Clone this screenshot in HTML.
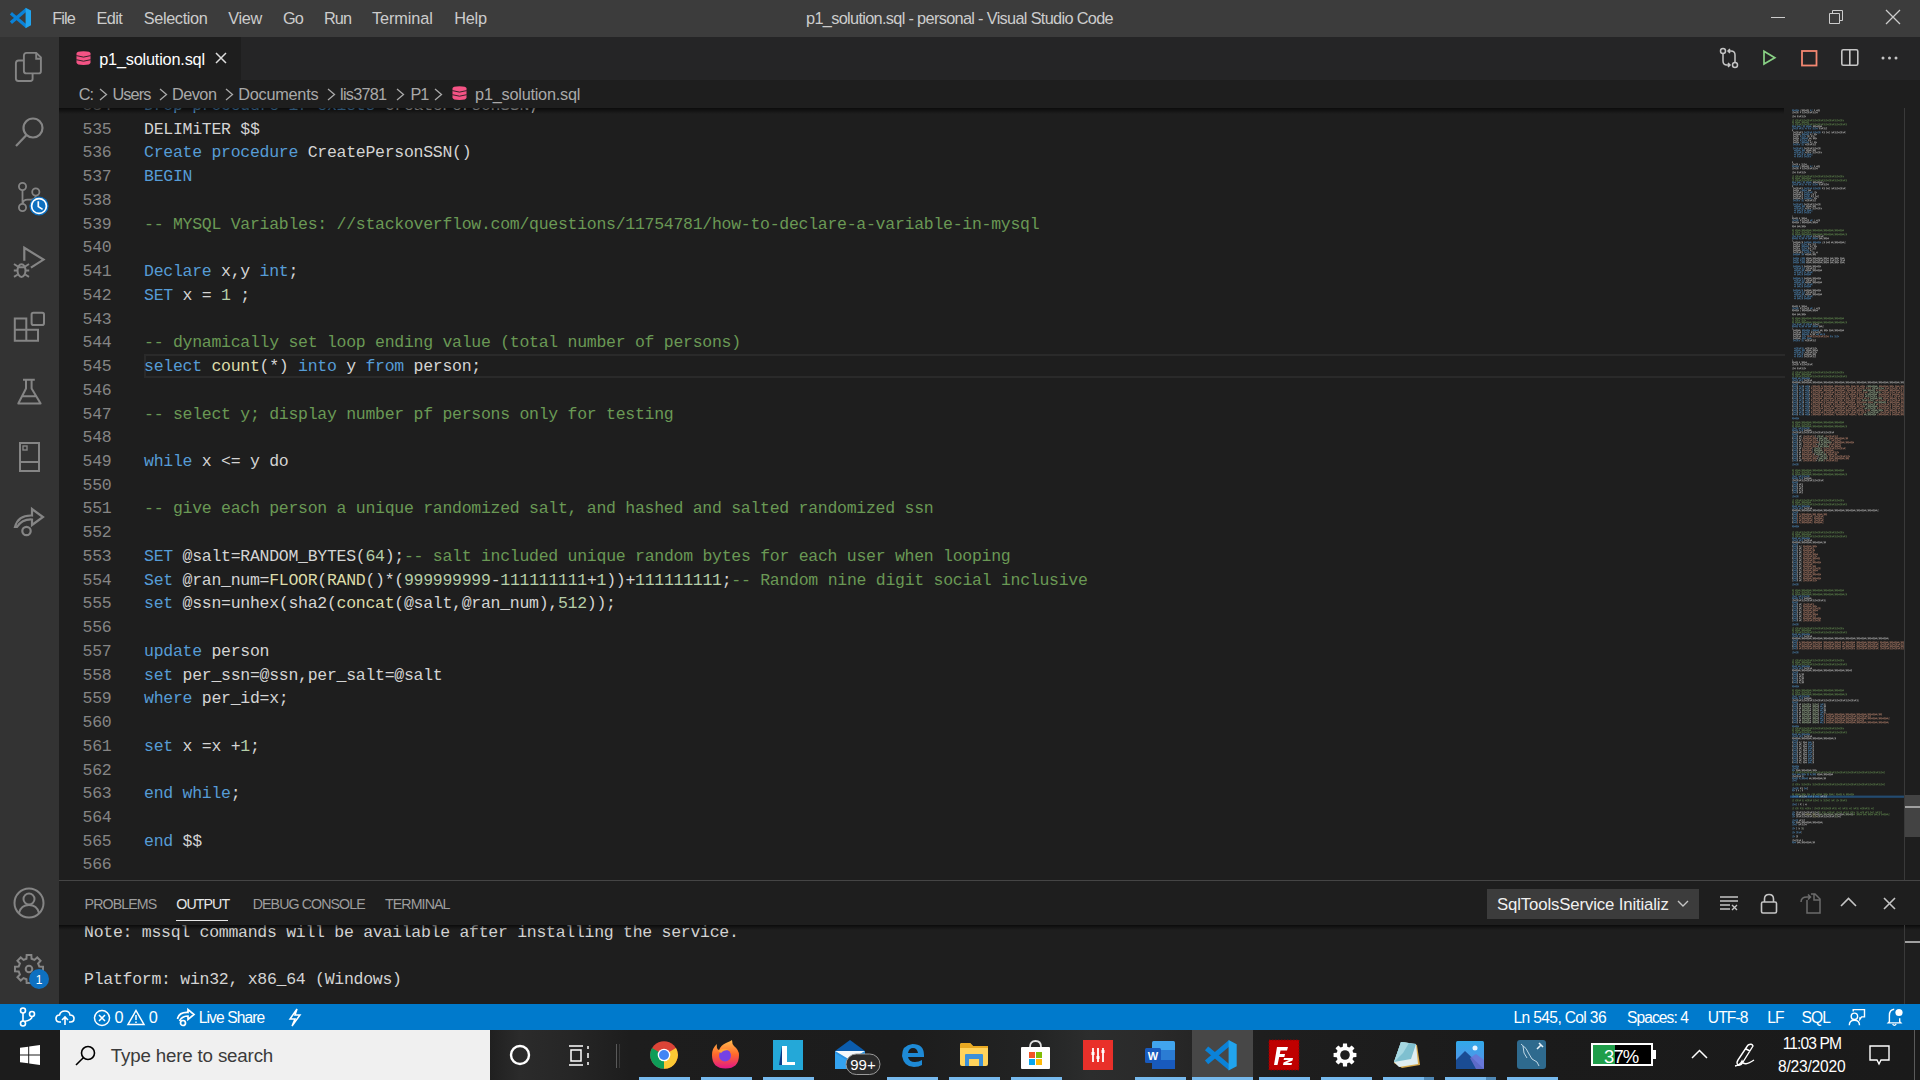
<!DOCTYPE html><html><head><meta charset="utf-8"><style>
*{margin:0;padding:0;box-sizing:border-box}
html,body{width:1920px;height:1080px;overflow:hidden;background:#1e1e1e}
body{position:relative;font-family:"Liberation Sans",sans-serif}
.t{position:absolute;white-space:pre}
.b{position:absolute}
svg{position:absolute;overflow:visible}
.code{position:absolute;white-space:pre;font-family:"Liberation Mono",monospace;font-size:16.5px;line-height:23.75px;letter-spacing:-0.275px;color:#d4d4d4}
.k{color:#569cd6}.c{color:#6a9955}.n{color:#b5cea8}.f{color:#dcdcaa}
</style></head><body><div class="b" style="left:0;top:0;width:1920px;height:37px;background:#3c3c3c"></div>
<svg style="left:0;top:0" width="48" height="36" viewBox="0 0 48 36">
<path d="M12.2 21.6 L25.6 10.3 M12.2 14.4 L25.6 25.7" stroke="#0a82d8" stroke-width="3.3" stroke-linecap="square"/>
<path d="M25.6 7.8 L31 10.6 V25.3 L25.6 28.2 Z" fill="#21a4ee"/></svg>
<div class="t" style="left:52.20px;top:8.35px;font-size:16.30px;line-height:20px;letter-spacing:-0.900px;color:#cccccc;font-family:"Liberation Sans", sans-serif;">File</div>
<div class="t" style="left:96.50px;top:8.35px;font-size:16.30px;line-height:20px;letter-spacing:-0.562px;color:#cccccc;font-family:"Liberation Sans", sans-serif;">Edit</div>
<div class="t" style="left:143.70px;top:8.35px;font-size:16.30px;line-height:20px;letter-spacing:-0.357px;color:#cccccc;font-family:"Liberation Sans", sans-serif;">Selection</div>
<div class="t" style="left:228.30px;top:8.35px;font-size:16.30px;line-height:20px;letter-spacing:-0.345px;color:#cccccc;font-family:"Liberation Sans", sans-serif;">View</div>
<div class="t" style="left:282.90px;top:8.35px;font-size:16.30px;line-height:20px;letter-spacing:-0.900px;color:#cccccc;font-family:"Liberation Sans", sans-serif;">Go</div>
<div class="t" style="left:324.00px;top:8.35px;font-size:16.30px;line-height:20px;letter-spacing:-0.900px;color:#cccccc;font-family:"Liberation Sans", sans-serif;">Run</div>
<div class="t" style="left:372.00px;top:8.35px;font-size:16.30px;line-height:20px;letter-spacing:-0.085px;color:#cccccc;font-family:"Liberation Sans", sans-serif;">Terminal</div>
<div class="t" style="left:454.20px;top:8.35px;font-size:16.30px;line-height:20px;letter-spacing:-0.241px;color:#cccccc;font-family:"Liberation Sans", sans-serif;">Help</div>
<div class="t" style="left:806.00px;top:8.35px;font-size:16.30px;line-height:20px;letter-spacing:-0.665px;color:#cccccc;font-family:"Liberation Sans", sans-serif;">p1_solution.sql - personal - Visual Studio Code</div>
<div class="b" style="left:1771px;top:17px;width:14px;height:1px;background:#cccccc"></div>
<svg style="left:1829px;top:10px" width="14" height="14" viewBox="0 0 14 14"><path d="M0.5 3.5 H10.5 V13.5 H0.5 Z M3.5 3.5 V0.5 H13.5 V10.5 H10.5" fill="none" stroke="#cccccc" stroke-width="1"/></svg>
<svg style="left:1886px;top:10px" width="14" height="14" viewBox="0 0 14 14"><path d="M0 0 L14 14 M14 0 L0 14" stroke="#cccccc" stroke-width="1.3"/></svg>
<div class="b" style="left:0;top:37px;width:59px;height:967px;background:#333333"></div>
<svg style="left:14px;top:51px" width="30" height="32" viewBox="0 0 30 32" fill="none" stroke="#858585" stroke-width="2">
<path d="M9.9 4.6 Q9.9 1.9 12.6 1.9 H22.2 L26.9 6.4 V20.2 Q26.9 22.4 24.7 22.4 H12.3 Q9.9 22.4 9.9 20 Z" stroke-width="1.9"/><path d="M22.2 1.9 V7.8 H26.9" stroke-width="1.9"/><path d="M9.9 9.5 H4.6 Q1.9 9.5 1.9 12.2 V27.6 Q1.9 30 4.3 30 H16.3 Q18.6 30 18.6 27.8 V22.4" stroke-width="1.9"/></svg>
<svg style="left:15px;top:116px" width="30" height="32" viewBox="0 0 30 32" fill="none" stroke="#858585" stroke-width="2.2">
<circle cx="18" cy="12" r="9.5"/><path d="M11.5 19 L1 30"/></svg>
<svg style="left:0;top:172px" width="60" height="50" viewBox="0 0 60 50" fill="none" stroke="#858585" stroke-width="1.8">
<circle cx="22.5" cy="14.5" r="3.6"/><circle cx="35.8" cy="20" r="3.6"/><circle cx="22.5" cy="35.5" r="3.6"/><path d="M22.5 18.1 V31.9 M35.8 23.6 Q35.8 27.6 31 27.6 H27.5 Q23 27.6 22.8 31.5"/></svg>
<svg style="left:0;top:172px" width="60" height="50" viewBox="0 0 60 50"><circle cx="39" cy="34" r="9.6" fill="#0e70c0"/><circle cx="39" cy="34" r="7.4" fill="none" stroke="#fff" stroke-width="1.7"/><path d="M38.3 29.3 V34.6 L42.6 37.4" stroke="#fff" stroke-width="1.7" fill="none"/></svg>
<svg style="left:12px;top:246px" width="34" height="32" viewBox="0 0 34 32" fill="none" stroke="#858585" stroke-width="2.2">
<path d="M12.3 14.8 V1.8 L31.5 13.6 L18.9 21.6"/><ellipse cx="9.5" cy="24.6" rx="4" ry="6.3" stroke-width="2"/><path d="M5.8 21.3 H13.2 M2 18 L5.8 20.5 M1.8 24.6 H5.5 M2 30.8 L5.8 28.5 M17 18 L13.2 20.5 M17.2 24.6 H13.5 M17 30.8 L13.2 28.5" stroke-width="2"/></svg>
<svg style="left:13px;top:311px" width="34" height="34" viewBox="0 0 34 34" fill="none" stroke="#858585" stroke-width="2.2">
<path d="M1.8 7.5 H13.3 V18.8 H25 V29.8 H1.8 Z M1.8 18.8 H13.3 V29.8" stroke-width="2"/><rect x="18.6" y="1.8" width="12.4" height="12.2" rx="1.8" stroke-width="2"/></svg>
<svg style="left:17px;top:376px" width="26" height="32" viewBox="0 0 26 32" fill="none" stroke="#858585" stroke-width="2.2">
<path d="M6 3.8 H17.8 M9 3.8 V12.5 L1.3 27.5 H23.6 L14.6 12.5 V3.8 M4.8 20.3 H20" stroke-width="2" stroke-linejoin="round"/></svg>
<svg style="left:18px;top:441px" width="24" height="32" viewBox="0 0 24 32" fill="none" stroke="#858585" stroke-width="2">
<rect x="2" y="2" width="19" height="28"/><path d="M2 21 H21"/><rect x="5" y="5" width="4" height="4" stroke-width="1.4"/></svg>
<svg style="left:13px;top:506px" width="34" height="34" viewBox="0 0 34 34" fill="none" stroke="#858585" stroke-width="2.2">
<path d="M2 21 Q5 9 19 9.5 V3 L30 11 L19 19 V13.5 Q9 13 4 21 Z"/><circle cx="13.5" cy="25" r="4.2"/></svg>
<svg style="left:12px;top:886px" width="34" height="34" viewBox="0 0 34 34" fill="none" stroke="#858585" stroke-width="2">
<circle cx="17" cy="17" r="14.5"/><circle cx="17" cy="13" r="5.5"/><path d="M7 27 Q9 19 17 19 Q25 19 27 27"/></svg>
<svg style="left:12.3px;top:951.8px" width="34" height="34" viewBox="0 0 34 34" fill="none" stroke="#858585" stroke-width="2">
<path d="M14.44 6.71 L14.66 2.99 L19.34 2.99 L19.56 6.71 L22.46 7.91 L25.25 5.44 L28.56 8.75 L26.09 11.54 L27.29 14.44 L31.01 14.66 L31.01 19.34 L27.29 19.56 L26.09 22.46 L28.56 25.25 L25.25 28.56 L22.46 26.09 L19.56 27.29 L19.34 31.01 L14.66 31.01 L14.44 27.29 L11.54 26.09 L8.75 28.56 L5.44 25.25 L7.91 22.46 L6.71 19.56 L2.99 19.34 L2.99 14.66 L6.71 14.44 L7.91 11.54 L5.44 8.75 L8.75 5.44 L11.54 7.91 Z" stroke-linejoin="miter"/><circle cx="17" cy="17" r="3.3"/></svg>
<svg style="left:28px;top:968px" width="22" height="22" viewBox="0 0 22 22"><circle cx="11" cy="11" r="10" fill="#0e70c0"/><text x="11" y="15.5" font-size="12" font-family="Liberation Sans" fill="#fff" text-anchor="middle">1</text></svg>
<div class="b" style="left:59px;top:37px;width:1861px;height:43px;background:#252526"></div>
<div class="b" style="left:59px;top:37px;width:182px;height:43px;background:#1e1e1e"></div>
<svg style="left:76px;top:51px" width="15" height="14" viewBox="0 0 15 14"><path d="M0.5 2.6 Q0.5 0.2 7.5 0.2 Q14.5 0.2 14.5 2.6 V11.4 Q14.5 13.9 7.5 13.9 Q0.5 13.9 0.5 11.4 Z" fill="#f55385"/><path d="M0.3 4.6 Q7.5 7.6 14.7 4.6 M0.3 8.7 Q7.5 11.7 14.7 8.7" fill="none" stroke="#1e1e1e" stroke-width="0.9"/></svg>
<div class="t" style="left:99.20px;top:49.35px;font-size:16.30px;line-height:20px;letter-spacing:-0.196px;color:#ffffff;font-family:"Liberation Sans", sans-serif;">p1_solution.sql</div>
<svg style="left:215px;top:52px" width="12" height="12" viewBox="0 0 12 12"><path d="M1 1 L11 11 M11 1 L1 11" stroke="#dddddd" stroke-width="1.5"/></svg>
<svg style="left:1719px;top:47px" width="20" height="22" viewBox="0 0 20 22" fill="none" stroke="#c5c5c5" stroke-width="1.5">
<circle cx="4" cy="4" r="2.5"/><circle cx="16" cy="18" r="2.5"/><path d="M4 6.5 V14 Q4 18 8 18 H11 M9 16 L11 18 L9 20 M16 15.5 V8 Q16 4 12 4 H9 M11 2 L9 4 L11 6"/></svg>
<svg style="left:1763px;top:50px" width="14" height="16" viewBox="0 0 14 16"><path d="M1 1.3 L11.8 7.7 L1 14 Z" fill="none" stroke="#89d185" stroke-width="1.7"/></svg>
<svg style="left:1801px;top:50px" width="17" height="17" viewBox="0 0 17 17"><rect x="1" y="1" width="14.5" height="14.5" fill="none" stroke="#f48771" stroke-width="1.8"/></svg>
<svg style="left:1841px;top:49px" width="18" height="17" viewBox="0 0 18 17"><rect x="0.8" y="0.8" width="16" height="15.5" rx="1.5" fill="none" stroke="#c5c5c5" stroke-width="1.6"/><path d="M8.8 1 V16" stroke="#c5c5c5" stroke-width="1.6"/></svg>
<svg style="left:1881px;top:56px" width="18" height="5" viewBox="0 0 18 5"><circle cx="2" cy="2" r="1.5" fill="#c5c5c5"/><circle cx="8.5" cy="2" r="1.5" fill="#c5c5c5"/><circle cx="15" cy="2" r="1.5" fill="#c5c5c5"/></svg>
<div class="b" style="left:59px;top:80px;width:1861px;height:28px;background:#1e1e1e"></div>
<div class="t" style="left:78.70px;top:84.05px;font-size:16.30px;line-height:20px;letter-spacing:-0.900px;color:#a9a9a9;font-family:"Liberation Sans", sans-serif;">C:</div>
<div class="t" style="left:112.50px;top:84.05px;font-size:16.30px;line-height:20px;letter-spacing:-0.900px;color:#a9a9a9;font-family:"Liberation Sans", sans-serif;">Users</div>
<div class="t" style="left:172.00px;top:84.05px;font-size:16.30px;line-height:20px;letter-spacing:-0.529px;color:#a9a9a9;font-family:"Liberation Sans", sans-serif;">Devon</div>
<div class="t" style="left:238.20px;top:84.05px;font-size:16.30px;line-height:20px;letter-spacing:-0.243px;color:#a9a9a9;font-family:"Liberation Sans", sans-serif;">Documents</div>
<div class="t" style="left:340.00px;top:84.05px;font-size:16.30px;line-height:20px;letter-spacing:-0.742px;color:#a9a9a9;font-family:"Liberation Sans", sans-serif;">lis3781</div>
<div class="t" style="left:410.40px;top:84.05px;font-size:16.30px;line-height:20px;letter-spacing:-0.900px;color:#a9a9a9;font-family:"Liberation Sans", sans-serif;">P1</div>
<div class="t" style="left:475.10px;top:84.05px;font-size:16.30px;line-height:20px;letter-spacing:-0.239px;color:#a9a9a9;font-family:"Liberation Sans", sans-serif;">p1_solution.sql</div>
<svg style="left:99.0px;top:88px" width="9" height="13" viewBox="0 0 9 13"><path d="M1 1 L7.5 6.5 L1 12" fill="none" stroke="#a9a9a9" stroke-width="1.3"/></svg>
<svg style="left:159.0px;top:88px" width="9" height="13" viewBox="0 0 9 13"><path d="M1 1 L7.5 6.5 L1 12" fill="none" stroke="#a9a9a9" stroke-width="1.3"/></svg>
<svg style="left:225.0px;top:88px" width="9" height="13" viewBox="0 0 9 13"><path d="M1 1 L7.5 6.5 L1 12" fill="none" stroke="#a9a9a9" stroke-width="1.3"/></svg>
<svg style="left:326.7px;top:88px" width="9" height="13" viewBox="0 0 9 13"><path d="M1 1 L7.5 6.5 L1 12" fill="none" stroke="#a9a9a9" stroke-width="1.3"/></svg>
<svg style="left:396.0px;top:88px" width="9" height="13" viewBox="0 0 9 13"><path d="M1 1 L7.5 6.5 L1 12" fill="none" stroke="#a9a9a9" stroke-width="1.3"/></svg>
<svg style="left:434.0px;top:88px" width="9" height="13" viewBox="0 0 9 13"><path d="M1 1 L7.5 6.5 L1 12" fill="none" stroke="#a9a9a9" stroke-width="1.3"/></svg>
<svg style="left:452px;top:86px" width="15" height="14" viewBox="0 0 15 14"><path d="M0.5 2.6 Q0.5 0.2 7.5 0.2 Q14.5 0.2 14.5 2.6 V11.4 Q14.5 13.9 7.5 13.9 Q0.5 13.9 0.5 11.4 Z" fill="#f55385"/><path d="M0.3 4.6 Q7.5 7.6 14.7 4.6 M0.3 8.7 Q7.5 11.7 14.7 8.7" fill="none" stroke="#1e1e1e" stroke-width="0.9"/></svg>
<div class="b" style="left:144px;top:354.2px;width:1641px;height:23.8px;border:2.6px solid #2a2a2a;border-right:none"></div>
<div class="b" style="left:59px;top:108px;width:1730px;height:773px;overflow:hidden">
<div class="code" style="left:23.5px;top:-14.00px;color:#858585">534</div>
<div class="code" style="left:85px;top:-14.00px"><span class="k">Drop procedure if exists</span> CreatePersonSSN;</div>
<div class="code" style="left:23.5px;top:9.73px;color:#858585">535</div>
<div class="code" style="left:85px;top:9.73px">DELIMiTER $$</div>
<div class="code" style="left:23.5px;top:33.47px;color:#858585">536</div>
<div class="code" style="left:85px;top:33.47px"><span class="k">Create procedure</span> CreatePersonSSN()</div>
<div class="code" style="left:23.5px;top:57.20px;color:#858585">537</div>
<div class="code" style="left:85px;top:57.20px"><span class="k">BEGIN</span></div>
<div class="code" style="left:23.5px;top:80.93px;color:#858585">538</div>
<div class="code" style="left:23.5px;top:104.67px;color:#858585">539</div>
<div class="code" style="left:85px;top:104.67px"><span class="c">-- MYSQL Variables: //stackoverflow.com/questions/11754781/how-to-declare-a-variable-in-mysql</span></div>
<div class="code" style="left:23.5px;top:128.40px;color:#858585">540</div>
<div class="code" style="left:23.5px;top:152.13px;color:#858585">541</div>
<div class="code" style="left:85px;top:152.13px"><span class="k">Declare</span> x,y <span class="k">int</span>;</div>
<div class="code" style="left:23.5px;top:175.87px;color:#858585">542</div>
<div class="code" style="left:85px;top:175.87px"><span class="k">SET</span> x = <span class="n">1</span> ;</div>
<div class="code" style="left:23.5px;top:199.60px;color:#858585">543</div>
<div class="code" style="left:23.5px;top:223.33px;color:#858585">544</div>
<div class="code" style="left:85px;top:223.33px"><span class="c">-- dynamically set loop ending value (total number of persons)</span></div>
<div class="code" style="left:23.5px;top:247.06px;color:#858585">545</div>
<div class="code" style="left:85px;top:247.06px"><span class="k">select</span> <span class="f">count</span>(*) <span class="k">into</span> y <span class="k">from</span> person;</div>
<div class="code" style="left:23.5px;top:270.80px;color:#858585">546</div>
<div class="code" style="left:23.5px;top:294.53px;color:#858585">547</div>
<div class="code" style="left:85px;top:294.53px"><span class="c">-- select y; display number pf persons only for testing</span></div>
<div class="code" style="left:23.5px;top:318.26px;color:#858585">548</div>
<div class="code" style="left:23.5px;top:342.00px;color:#858585">549</div>
<div class="code" style="left:85px;top:342.00px"><span class="k">while</span> x &lt;= y do</div>
<div class="code" style="left:23.5px;top:365.73px;color:#858585">550</div>
<div class="code" style="left:23.5px;top:389.46px;color:#858585">551</div>
<div class="code" style="left:85px;top:389.46px"><span class="c">-- give each person a unique randomized salt, and hashed and salted randomized ssn</span></div>
<div class="code" style="left:23.5px;top:413.20px;color:#858585">552</div>
<div class="code" style="left:23.5px;top:436.93px;color:#858585">553</div>
<div class="code" style="left:85px;top:436.93px"><span class="k">SET</span> @salt=RANDOM_BYTES(<span class="n">64</span>);<span class="c">-- salt included unique random bytes for each user when looping</span></div>
<div class="code" style="left:23.5px;top:460.66px;color:#858585">554</div>
<div class="code" style="left:85px;top:460.66px"><span class="k">Set</span> @ran_num=<span class="f">FLOOR</span>(<span class="f">RAND</span>()*(<span class="n">999999999</span>-<span class="n">111111111</span>+<span class="n">1</span>))+<span class="n">111111111</span>;<span class="c">-- Random nine digit social inclusive</span></div>
<div class="code" style="left:23.5px;top:484.39px;color:#858585">555</div>
<div class="code" style="left:85px;top:484.39px"><span class="k">set</span> @ssn=unhex(sha2(<span class="f">concat</span>(@salt,@ran_num),<span class="n">512</span>));</div>
<div class="code" style="left:23.5px;top:508.13px;color:#858585">556</div>
<div class="code" style="left:23.5px;top:531.86px;color:#858585">557</div>
<div class="code" style="left:85px;top:531.86px"><span class="k">update</span> person</div>
<div class="code" style="left:23.5px;top:555.59px;color:#858585">558</div>
<div class="code" style="left:85px;top:555.59px"><span class="k">set</span> per_ssn=@ssn,per_salt=@salt</div>
<div class="code" style="left:23.5px;top:579.33px;color:#858585">559</div>
<div class="code" style="left:85px;top:579.33px"><span class="k">where</span> per_id=x;</div>
<div class="code" style="left:23.5px;top:603.06px;color:#858585">560</div>
<div class="code" style="left:23.5px;top:626.79px;color:#858585">561</div>
<div class="code" style="left:85px;top:626.79px"><span class="k">set</span> x =x +<span class="n">1</span>;</div>
<div class="code" style="left:23.5px;top:650.53px;color:#858585">562</div>
<div class="code" style="left:23.5px;top:674.26px;color:#858585">563</div>
<div class="code" style="left:85px;top:674.26px"><span class="k">end while</span>;</div>
<div class="code" style="left:23.5px;top:697.99px;color:#858585">564</div>
<div class="code" style="left:23.5px;top:721.72px;color:#858585">565</div>
<div class="code" style="left:85px;top:721.72px"><span class="k">end</span> $$</div>
<div class="code" style="left:23.5px;top:745.46px;color:#858585">566</div>
</div>
<div class="b" style="left:59px;top:108px;width:1725px;height:6px;background:linear-gradient(#000000a0,#00000000)"></div>
<svg style="left:1792px;top:108px" width="112" height="772" viewBox="0 0 112 772"><defs><pattern id="mmp" width="11" height="4" patternUnits="userSpaceOnUse"><rect x="0" y="0" width="1" height="1" fill="#fff" fill-opacity="0.45"/><rect x="0" y="1" width="1" height="1" fill="#fff" fill-opacity="0.90"/><rect x="0" y="2" width="1" height="1" fill="#fff" fill-opacity="0.90"/><rect x="0" y="3" width="1" height="1" fill="#fff" fill-opacity="0.45"/><rect x="1" y="0" width="1" height="1" fill="#fff" fill-opacity="0.60"/><rect x="1" y="1" width="1" height="1" fill="#fff" fill-opacity="0.90"/><rect x="1" y="2" width="1" height="1" fill="#fff" fill-opacity="0.75"/><rect x="1" y="3" width="1" height="1" fill="#fff" fill-opacity="1.00"/><rect x="2" y="0" width="1" height="1" fill="#fff" fill-opacity="0.90"/><rect x="2" y="1" width="1" height="1" fill="#fff" fill-opacity="0.25"/><rect x="2" y="2" width="1" height="1" fill="#fff" fill-opacity="0.90"/><rect x="2" y="3" width="1" height="1" fill="#fff" fill-opacity="0.25"/><rect x="3" y="0" width="1" height="1" fill="#fff" fill-opacity="0.75"/><rect x="3" y="1" width="1" height="1" fill="#fff" fill-opacity="0.60"/><rect x="3" y="2" width="1" height="1" fill="#fff" fill-opacity="0.90"/><rect x="3" y="3" width="1" height="1" fill="#fff" fill-opacity="0.45"/><rect x="4" y="0" width="1" height="1" fill="#fff" fill-opacity="0.45"/><rect x="4" y="1" width="1" height="1" fill="#fff" fill-opacity="1.00"/><rect x="4" y="2" width="1" height="1" fill="#fff" fill-opacity="0.75"/><rect x="4" y="3" width="1" height="1" fill="#fff" fill-opacity="0.90"/><rect x="5" y="0" width="1" height="1" fill="#fff" fill-opacity="0.90"/><rect x="5" y="1" width="1" height="1" fill="#fff" fill-opacity="0.75"/><rect x="5" y="2" width="1" height="1" fill="#fff" fill-opacity="0.75"/><rect x="5" y="3" width="1" height="1" fill="#fff" fill-opacity="1.00"/><rect x="6" y="0" width="1" height="1" fill="#fff" fill-opacity="0.45"/><rect x="6" y="1" width="1" height="1" fill="#fff" fill-opacity="0.45"/><rect x="6" y="2" width="1" height="1" fill="#fff" fill-opacity="1.00"/><rect x="6" y="3" width="1" height="1" fill="#fff" fill-opacity="0.45"/><rect x="7" y="0" width="1" height="1" fill="#fff" fill-opacity="0.90"/><rect x="7" y="1" width="1" height="1" fill="#fff" fill-opacity="0.75"/><rect x="7" y="2" width="1" height="1" fill="#fff" fill-opacity="1.00"/><rect x="7" y="3" width="1" height="1" fill="#fff" fill-opacity="0.25"/><rect x="8" y="0" width="1" height="1" fill="#fff" fill-opacity="1.00"/><rect x="8" y="1" width="1" height="1" fill="#fff" fill-opacity="0.25"/><rect x="8" y="2" width="1" height="1" fill="#fff" fill-opacity="0.45"/><rect x="8" y="3" width="1" height="1" fill="#fff" fill-opacity="0.90"/><rect x="9" y="0" width="1" height="1" fill="#fff" fill-opacity="0.25"/><rect x="9" y="1" width="1" height="1" fill="#fff" fill-opacity="0.60"/><rect x="9" y="2" width="1" height="1" fill="#fff" fill-opacity="0.25"/><rect x="9" y="3" width="1" height="1" fill="#fff" fill-opacity="0.60"/><rect x="10" y="0" width="1" height="1" fill="#fff" fill-opacity="0.75"/><rect x="10" y="1" width="1" height="1" fill="#fff" fill-opacity="0.90"/><rect x="10" y="2" width="1" height="1" fill="#fff" fill-opacity="1.00"/><rect x="10" y="3" width="1" height="1" fill="#fff" fill-opacity="0.75"/></pattern><mask id="mmm"><rect x="0" y="0" width="112" height="772" fill="url(#mmp)"/></mask></defs><rect x="-2" y="687.6" width="114" height="2.2" fill="#234b70"/><g opacity="0.52" mask="url(#mmm)"><rect x="0" y="1.4" width="7" height="2" fill="#569cd6"/><rect x="8" y="1.4" width="9" height="2" fill="#d4d4d4"/><rect x="18" y="1.4" width="3" height="2" fill="#569cd6"/><rect x="22" y="1.4" width="1" height="2" fill="#d4d4d4"/><rect x="24" y="1.4" width="4" height="2" fill="#d4d4d4"/><rect x="0" y="3.4" width="7" height="2" fill="#d4d4d4"/><rect x="8" y="3.4" width="1" height="2" fill="#d4d4d4"/><rect x="10" y="3.4" width="16" height="2" fill="#d4d4d4"/><rect x="0" y="7.4" width="4" height="2" fill="#d4d4d4"/><rect x="5" y="7.4" width="9" height="2" fill="#d4d4d4"/><rect x="0" y="11.4" width="2" height="2" fill="#6a9955"/><rect x="3" y="11.4" width="49" height="2" fill="#6a9955"/><rect x="0" y="13.4" width="2" height="2" fill="#6a9955"/><rect x="3" y="13.4" width="5" height="2" fill="#6a9955"/><rect x="9" y="13.4" width="8" height="2" fill="#6a9955"/><rect x="0" y="15.4" width="2" height="2" fill="#6a9955"/><rect x="3" y="15.4" width="52" height="2" fill="#6a9955"/><rect x="0" y="17.4" width="4" height="2" fill="#569cd6"/><rect x="5" y="17.4" width="5" height="2" fill="#569cd6"/><rect x="11" y="17.4" width="2" height="2" fill="#569cd6"/><rect x="14" y="17.4" width="6" height="2" fill="#569cd6"/><rect x="21" y="17.4" width="9" height="2" fill="#d4d4d4"/><rect x="0" y="19.4" width="6" height="2" fill="#569cd6"/><rect x="7" y="19.4" width="5" height="2" fill="#569cd6"/><rect x="13" y="19.4" width="2" height="2" fill="#569cd6"/><rect x="16" y="19.4" width="3" height="2" fill="#569cd6"/><rect x="20" y="19.4" width="6" height="2" fill="#569cd6"/><rect x="27" y="19.4" width="8" height="2" fill="#d4d4d4"/><rect x="0" y="21.4" width="1" height="2" fill="#d4d4d4"/><rect x="1" y="23.4" width="10" height="2" fill="#d4d4d4"/><rect x="12" y="23.4" width="8" height="2" fill="#569cd6"/><rect x="21" y="23.4" width="8" height="2" fill="#569cd6"/><rect x="30" y="23.4" width="3" height="2" fill="#d4d4d4"/><rect x="34" y="23.4" width="4" height="2" fill="#d4d4d4"/><rect x="39" y="23.4" width="15" height="2" fill="#d4d4d4"/><rect x="1" y="25.4" width="8" height="2" fill="#d4d4d4"/><rect x="10" y="25.4" width="7" height="2" fill="#569cd6"/><rect x="18" y="25.4" width="3" height="2" fill="#d4d4d4"/><rect x="22" y="25.4" width="3" height="2" fill="#d4d4d4"/><rect x="1" y="27.4" width="6" height="2" fill="#d4d4d4"/><rect x="8" y="27.4" width="6" height="2" fill="#569cd6"/><rect x="15" y="27.4" width="3" height="2" fill="#d4d4d4"/><rect x="19" y="27.4" width="4" height="2" fill="#d4d4d4"/><rect x="1" y="29.4" width="6" height="2" fill="#d4d4d4"/><rect x="8" y="29.4" width="8" height="2" fill="#569cd6"/><rect x="17" y="29.4" width="3" height="2" fill="#d4d4d4"/><rect x="21" y="29.4" width="4" height="2" fill="#d4d4d4"/><rect x="1" y="31.4" width="6" height="2" fill="#d4d4d4"/><rect x="8" y="31.4" width="7" height="2" fill="#569cd6"/><rect x="16" y="31.4" width="3" height="2" fill="#d4d4d4"/><rect x="1" y="33.4" width="6" height="2" fill="#d4d4d4"/><rect x="8" y="33.4" width="9" height="2" fill="#569cd6"/><rect x="18" y="33.4" width="3" height="2" fill="#d4d4d4"/><rect x="22" y="33.4" width="3" height="2" fill="#d4d4d4"/><rect x="1" y="35.4" width="7" height="2" fill="#569cd6"/><rect x="9" y="35.4" width="3" height="2" fill="#569cd6"/><rect x="13" y="35.4" width="11" height="2" fill="#d4d4d4"/><rect x="1" y="39.4" width="10" height="2" fill="#569cd6"/><rect x="12" y="39.4" width="17" height="2" fill="#d4d4d4"/><rect x="2" y="41.4" width="7" height="2" fill="#569cd6"/><rect x="10" y="41.4" width="3" height="2" fill="#569cd6"/><rect x="14" y="41.4" width="10" height="2" fill="#d4d4d4"/><rect x="2" y="43.4" width="10" height="2" fill="#569cd6"/><rect x="13" y="43.4" width="6" height="2" fill="#d4d4d4"/><rect x="20" y="43.4" width="10" height="2" fill="#d4d4d4"/><rect x="2" y="45.4" width="2" height="2" fill="#569cd6"/><rect x="5" y="45.4" width="6" height="2" fill="#569cd6"/><rect x="12" y="45.4" width="2" height="2" fill="#569cd6"/><rect x="15" y="45.4" width="6" height="2" fill="#569cd6"/><rect x="2" y="47.4" width="2" height="2" fill="#569cd6"/><rect x="5" y="47.4" width="6" height="2" fill="#569cd6"/><rect x="12" y="47.4" width="7" height="2" fill="#569cd6"/><rect x="0" y="53.4" width="1" height="2" fill="#d4d4d4"/><rect x="0" y="55.4" width="6" height="2" fill="#d4d4d4"/><rect x="7" y="55.4" width="1" height="2" fill="#d4d4d4"/><rect x="9" y="55.4" width="6" height="2" fill="#d4d4d4"/><rect x="0" y="57.4" width="7" height="2" fill="#569cd6"/><rect x="8" y="57.4" width="9" height="2" fill="#d4d4d4"/><rect x="18" y="57.4" width="3" height="2" fill="#569cd6"/><rect x="22" y="57.4" width="1" height="2" fill="#d4d4d4"/><rect x="24" y="57.4" width="4" height="2" fill="#d4d4d4"/><rect x="0" y="59.4" width="7" height="2" fill="#d4d4d4"/><rect x="8" y="59.4" width="1" height="2" fill="#d4d4d4"/><rect x="10" y="59.4" width="16" height="2" fill="#d4d4d4"/><rect x="0" y="63.4" width="4" height="2" fill="#d4d4d4"/><rect x="5" y="63.4" width="9" height="2" fill="#d4d4d4"/><rect x="0" y="67.4" width="2" height="2" fill="#6a9955"/><rect x="3" y="67.4" width="49" height="2" fill="#6a9955"/><rect x="0" y="69.4" width="2" height="2" fill="#6a9955"/><rect x="3" y="69.4" width="5" height="2" fill="#6a9955"/><rect x="9" y="69.4" width="10" height="2" fill="#6a9955"/><rect x="0" y="71.4" width="2" height="2" fill="#6a9955"/><rect x="3" y="71.4" width="52" height="2" fill="#6a9955"/><rect x="0" y="73.4" width="4" height="2" fill="#569cd6"/><rect x="5" y="73.4" width="5" height="2" fill="#569cd6"/><rect x="11" y="73.4" width="2" height="2" fill="#569cd6"/><rect x="14" y="73.4" width="6" height="2" fill="#569cd6"/><rect x="21" y="73.4" width="11" height="2" fill="#d4d4d4"/><rect x="0" y="75.4" width="6" height="2" fill="#569cd6"/><rect x="7" y="75.4" width="5" height="2" fill="#569cd6"/><rect x="13" y="75.4" width="2" height="2" fill="#569cd6"/><rect x="16" y="75.4" width="3" height="2" fill="#569cd6"/><rect x="20" y="75.4" width="6" height="2" fill="#569cd6"/><rect x="27" y="75.4" width="10" height="2" fill="#d4d4d4"/><rect x="0" y="77.4" width="1" height="2" fill="#d4d4d4"/><rect x="1" y="79.4" width="10" height="2" fill="#d4d4d4"/><rect x="12" y="79.4" width="8" height="2" fill="#569cd6"/><rect x="21" y="79.4" width="8" height="2" fill="#569cd6"/><rect x="30" y="79.4" width="3" height="2" fill="#d4d4d4"/><rect x="34" y="79.4" width="4" height="2" fill="#d4d4d4"/><rect x="39" y="79.4" width="15" height="2" fill="#d4d4d4"/><rect x="1" y="81.4" width="6" height="2" fill="#d4d4d4"/><rect x="8" y="81.4" width="7" height="2" fill="#569cd6"/><rect x="16" y="81.4" width="3" height="2" fill="#d4d4d4"/><rect x="1" y="83.4" width="10" height="2" fill="#d4d4d4"/><rect x="12" y="83.4" width="9" height="2" fill="#569cd6"/><rect x="22" y="83.4" width="3" height="2" fill="#d4d4d4"/><rect x="1" y="85.4" width="10" height="2" fill="#d4d4d4"/><rect x="12" y="85.4" width="6" height="2" fill="#569cd6"/><rect x="19" y="85.4" width="3" height="2" fill="#d4d4d4"/><rect x="23" y="85.4" width="1" height="2" fill="#d4d4d4"/><rect x="1" y="87.4" width="10" height="2" fill="#d4d4d4"/><rect x="12" y="87.4" width="6" height="2" fill="#569cd6"/><rect x="19" y="87.4" width="3" height="2" fill="#d4d4d4"/><rect x="23" y="87.4" width="4" height="2" fill="#d4d4d4"/><rect x="1" y="89.4" width="10" height="2" fill="#d4d4d4"/><rect x="12" y="89.4" width="9" height="2" fill="#569cd6"/><rect x="22" y="89.4" width="3" height="2" fill="#d4d4d4"/><rect x="1" y="91.4" width="7" height="2" fill="#569cd6"/><rect x="9" y="91.4" width="3" height="2" fill="#569cd6"/><rect x="13" y="91.4" width="11" height="2" fill="#d4d4d4"/><rect x="1" y="95.4" width="10" height="2" fill="#569cd6"/><rect x="12" y="95.4" width="17" height="2" fill="#d4d4d4"/><rect x="2" y="97.4" width="7" height="2" fill="#569cd6"/><rect x="10" y="97.4" width="3" height="2" fill="#569cd6"/><rect x="14" y="97.4" width="10" height="2" fill="#d4d4d4"/><rect x="2" y="99.4" width="10" height="2" fill="#569cd6"/><rect x="13" y="99.4" width="6" height="2" fill="#d4d4d4"/><rect x="20" y="99.4" width="10" height="2" fill="#d4d4d4"/><rect x="2" y="101.4" width="2" height="2" fill="#569cd6"/><rect x="5" y="101.4" width="6" height="2" fill="#569cd6"/><rect x="12" y="101.4" width="2" height="2" fill="#569cd6"/><rect x="15" y="101.4" width="6" height="2" fill="#569cd6"/><rect x="2" y="103.4" width="2" height="2" fill="#569cd6"/><rect x="5" y="103.4" width="6" height="2" fill="#569cd6"/><rect x="12" y="103.4" width="7" height="2" fill="#569cd6"/><rect x="0" y="107.4" width="1" height="2" fill="#d4d4d4"/><rect x="0" y="109.4" width="6" height="2" fill="#d4d4d4"/><rect x="7" y="109.4" width="1" height="2" fill="#d4d4d4"/><rect x="9" y="109.4" width="6" height="2" fill="#d4d4d4"/><rect x="0" y="111.4" width="7" height="2" fill="#569cd6"/><rect x="8" y="111.4" width="9" height="2" fill="#d4d4d4"/><rect x="18" y="111.4" width="3" height="2" fill="#569cd6"/><rect x="22" y="111.4" width="1" height="2" fill="#d4d4d4"/><rect x="24" y="111.4" width="4" height="2" fill="#d4d4d4"/><rect x="0" y="113.4" width="7" height="2" fill="#d4d4d4"/><rect x="8" y="113.4" width="1" height="2" fill="#d4d4d4"/><rect x="10" y="113.4" width="16" height="2" fill="#d4d4d4"/><rect x="0" y="117.4" width="4" height="2" fill="#d4d4d4"/><rect x="5" y="117.4" width="9" height="2" fill="#d4d4d4"/><rect x="0" y="121.4" width="2" height="2" fill="#6a9955"/><rect x="3" y="121.4" width="49" height="2" fill="#6a9955"/><rect x="0" y="123.4" width="2" height="2" fill="#6a9955"/><rect x="3" y="123.4" width="5" height="2" fill="#6a9955"/><rect x="9" y="123.4" width="10" height="2" fill="#6a9955"/><rect x="0" y="125.4" width="2" height="2" fill="#6a9955"/><rect x="3" y="125.4" width="52" height="2" fill="#6a9955"/><rect x="0" y="127.4" width="4" height="2" fill="#569cd6"/><rect x="5" y="127.4" width="5" height="2" fill="#569cd6"/><rect x="11" y="127.4" width="2" height="2" fill="#569cd6"/><rect x="14" y="127.4" width="6" height="2" fill="#569cd6"/><rect x="21" y="127.4" width="11" height="2" fill="#d4d4d4"/><rect x="0" y="129.4" width="6" height="2" fill="#569cd6"/><rect x="7" y="129.4" width="5" height="2" fill="#569cd6"/><rect x="13" y="129.4" width="2" height="2" fill="#569cd6"/><rect x="16" y="129.4" width="3" height="2" fill="#569cd6"/><rect x="20" y="129.4" width="6" height="2" fill="#569cd6"/><rect x="27" y="129.4" width="10" height="2" fill="#d4d4d4"/><rect x="0" y="131.4" width="1" height="2" fill="#d4d4d4"/><rect x="1" y="133.4" width="10" height="2" fill="#d4d4d4"/><rect x="12" y="133.4" width="8" height="2" fill="#569cd6"/><rect x="21" y="133.4" width="8" height="2" fill="#569cd6"/><rect x="30" y="133.4" width="3" height="2" fill="#d4d4d4"/><rect x="34" y="133.4" width="4" height="2" fill="#d4d4d4"/><rect x="39" y="133.4" width="15" height="2" fill="#d4d4d4"/><rect x="1" y="135.4" width="7" height="2" fill="#d4d4d4"/><rect x="9" y="135.4" width="6" height="2" fill="#569cd6"/><rect x="16" y="135.4" width="3" height="2" fill="#d4d4d4"/><rect x="20" y="135.4" width="4" height="2" fill="#d4d4d4"/><rect x="1" y="137.4" width="7" height="2" fill="#d4d4d4"/><rect x="9" y="137.4" width="8" height="2" fill="#569cd6"/><rect x="18" y="137.4" width="3" height="2" fill="#d4d4d4"/><rect x="22" y="137.4" width="3" height="2" fill="#d4d4d4"/><rect x="1" y="139.4" width="7" height="2" fill="#d4d4d4"/><rect x="9" y="139.4" width="6" height="2" fill="#569cd6"/><rect x="16" y="139.4" width="3" height="2" fill="#d4d4d4"/><rect x="20" y="139.4" width="4" height="2" fill="#d4d4d4"/><rect x="1" y="141.4" width="8" height="2" fill="#d4d4d4"/><rect x="10" y="141.4" width="7" height="2" fill="#569cd6"/><rect x="18" y="141.4" width="3" height="2" fill="#d4d4d4"/><rect x="1" y="143.4" width="10" height="2" fill="#d4d4d4"/><rect x="12" y="143.4" width="7" height="2" fill="#569cd6"/><rect x="20" y="143.4" width="3" height="2" fill="#d4d4d4"/><rect x="24" y="143.4" width="2" height="2" fill="#d4d4d4"/><rect x="1" y="145.4" width="7" height="2" fill="#569cd6"/><rect x="9" y="145.4" width="3" height="2" fill="#569cd6"/><rect x="13" y="145.4" width="11" height="2" fill="#d4d4d4"/><rect x="1" y="149.4" width="6" height="2" fill="#569cd6"/><rect x="8" y="149.4" width="5" height="2" fill="#569cd6"/><rect x="14" y="149.4" width="23" height="2" fill="#d4d4d4"/><rect x="38" y="149.4" width="9" height="2" fill="#d4d4d4"/><rect x="48" y="149.4" width="5" height="2" fill="#d4d4d4"/><rect x="1" y="151.4" width="6" height="2" fill="#569cd6"/><rect x="8" y="151.4" width="5" height="2" fill="#569cd6"/><rect x="14" y="151.4" width="23" height="2" fill="#d4d4d4"/><rect x="38" y="151.4" width="9" height="2" fill="#d4d4d4"/><rect x="48" y="151.4" width="5" height="2" fill="#d4d4d4"/><rect x="1" y="153.4" width="6" height="2" fill="#569cd6"/><rect x="8" y="153.4" width="5" height="2" fill="#569cd6"/><rect x="14" y="153.4" width="23" height="2" fill="#d4d4d4"/><rect x="38" y="153.4" width="9" height="2" fill="#d4d4d4"/><rect x="48" y="153.4" width="5" height="2" fill="#d4d4d4"/><rect x="1" y="157.4" width="10" height="2" fill="#569cd6"/><rect x="12" y="157.4" width="17" height="2" fill="#d4d4d4"/><rect x="2" y="159.4" width="7" height="2" fill="#569cd6"/><rect x="10" y="159.4" width="3" height="2" fill="#569cd6"/><rect x="14" y="159.4" width="10" height="2" fill="#d4d4d4"/><rect x="2" y="161.4" width="10" height="2" fill="#569cd6"/><rect x="13" y="161.4" width="6" height="2" fill="#d4d4d4"/><rect x="20" y="161.4" width="10" height="2" fill="#d4d4d4"/><rect x="2" y="163.4" width="2" height="2" fill="#569cd6"/><rect x="5" y="163.4" width="6" height="2" fill="#569cd6"/><rect x="12" y="163.4" width="2" height="2" fill="#569cd6"/><rect x="15" y="163.4" width="6" height="2" fill="#569cd6"/><rect x="2" y="165.4" width="2" height="2" fill="#569cd6"/><rect x="5" y="165.4" width="6" height="2" fill="#569cd6"/><rect x="12" y="165.4" width="7" height="2" fill="#569cd6"/><rect x="1" y="169.4" width="10" height="2" fill="#569cd6"/><rect x="12" y="169.4" width="17" height="2" fill="#d4d4d4"/><rect x="2" y="171.4" width="7" height="2" fill="#569cd6"/><rect x="10" y="171.4" width="3" height="2" fill="#569cd6"/><rect x="14" y="171.4" width="10" height="2" fill="#d4d4d4"/><rect x="2" y="173.4" width="10" height="2" fill="#569cd6"/><rect x="13" y="173.4" width="6" height="2" fill="#d4d4d4"/><rect x="20" y="173.4" width="10" height="2" fill="#d4d4d4"/><rect x="2" y="175.4" width="2" height="2" fill="#569cd6"/><rect x="5" y="175.4" width="6" height="2" fill="#569cd6"/><rect x="12" y="175.4" width="2" height="2" fill="#569cd6"/><rect x="15" y="175.4" width="6" height="2" fill="#569cd6"/><rect x="2" y="177.4" width="2" height="2" fill="#569cd6"/><rect x="5" y="177.4" width="6" height="2" fill="#569cd6"/><rect x="12" y="177.4" width="7" height="2" fill="#569cd6"/><rect x="1" y="181.4" width="10" height="2" fill="#569cd6"/><rect x="12" y="181.4" width="17" height="2" fill="#d4d4d4"/><rect x="2" y="183.4" width="7" height="2" fill="#569cd6"/><rect x="10" y="183.4" width="3" height="2" fill="#569cd6"/><rect x="14" y="183.4" width="10" height="2" fill="#d4d4d4"/><rect x="2" y="185.4" width="10" height="2" fill="#569cd6"/><rect x="13" y="185.4" width="6" height="2" fill="#d4d4d4"/><rect x="20" y="185.4" width="10" height="2" fill="#d4d4d4"/><rect x="2" y="187.4" width="2" height="2" fill="#569cd6"/><rect x="5" y="187.4" width="6" height="2" fill="#569cd6"/><rect x="12" y="187.4" width="2" height="2" fill="#569cd6"/><rect x="15" y="187.4" width="6" height="2" fill="#569cd6"/><rect x="2" y="189.4" width="2" height="2" fill="#569cd6"/><rect x="5" y="189.4" width="6" height="2" fill="#569cd6"/><rect x="12" y="189.4" width="7" height="2" fill="#569cd6"/><rect x="0" y="197.4" width="6" height="2" fill="#d4d4d4"/><rect x="7" y="197.4" width="1" height="2" fill="#d4d4d4"/><rect x="9" y="197.4" width="6" height="2" fill="#d4d4d4"/><rect x="0" y="199.4" width="7" height="2" fill="#569cd6"/><rect x="8" y="199.4" width="9" height="2" fill="#d4d4d4"/><rect x="18" y="199.4" width="3" height="2" fill="#569cd6"/><rect x="22" y="199.4" width="1" height="2" fill="#d4d4d4"/><rect x="24" y="199.4" width="4" height="2" fill="#d4d4d4"/><rect x="0" y="201.4" width="7" height="2" fill="#d4d4d4"/><rect x="8" y="201.4" width="1" height="2" fill="#d4d4d4"/><rect x="10" y="201.4" width="16" height="2" fill="#d4d4d4"/><rect x="0" y="205.4" width="4" height="2" fill="#d4d4d4"/><rect x="5" y="205.4" width="9" height="2" fill="#d4d4d4"/><rect x="0" y="209.4" width="2" height="2" fill="#6a9955"/><rect x="3" y="209.4" width="49" height="2" fill="#6a9955"/><rect x="0" y="211.4" width="2" height="2" fill="#6a9955"/><rect x="3" y="211.4" width="5" height="2" fill="#6a9955"/><rect x="9" y="211.4" width="5" height="2" fill="#6a9955"/><rect x="0" y="213.4" width="2" height="2" fill="#6a9955"/><rect x="3" y="213.4" width="52" height="2" fill="#6a9955"/><rect x="0" y="215.4" width="4" height="2" fill="#569cd6"/><rect x="5" y="215.4" width="5" height="2" fill="#569cd6"/><rect x="11" y="215.4" width="2" height="2" fill="#569cd6"/><rect x="14" y="215.4" width="6" height="2" fill="#569cd6"/><rect x="21" y="215.4" width="6" height="2" fill="#d4d4d4"/><rect x="0" y="217.4" width="6" height="2" fill="#569cd6"/><rect x="7" y="217.4" width="5" height="2" fill="#569cd6"/><rect x="13" y="217.4" width="2" height="2" fill="#569cd6"/><rect x="16" y="217.4" width="3" height="2" fill="#569cd6"/><rect x="20" y="217.4" width="6" height="2" fill="#569cd6"/><rect x="27" y="217.4" width="5" height="2" fill="#d4d4d4"/><rect x="0" y="219.4" width="1" height="2" fill="#d4d4d4"/><rect x="1" y="221.4" width="8" height="2" fill="#d4d4d4"/><rect x="10" y="221.4" width="8" height="2" fill="#569cd6"/><rect x="19" y="221.4" width="8" height="2" fill="#569cd6"/><rect x="28" y="221.4" width="3" height="2" fill="#d4d4d4"/><rect x="32" y="221.4" width="4" height="2" fill="#d4d4d4"/><rect x="37" y="221.4" width="15" height="2" fill="#d4d4d4"/><rect x="1" y="223.4" width="8" height="2" fill="#d4d4d4"/><rect x="10" y="223.4" width="8" height="2" fill="#569cd6"/><rect x="19" y="223.4" width="10" height="2" fill="#d4d4d4"/><rect x="1" y="225.4" width="8" height="2" fill="#d4d4d4"/><rect x="10" y="225.4" width="7" height="2" fill="#569cd6"/><rect x="18" y="225.4" width="5" height="2" fill="#d4d4d4"/><rect x="24" y="225.4" width="3" height="2" fill="#569cd6"/><rect x="28" y="225.4" width="5" height="2" fill="#569cd6"/><rect x="1" y="227.4" width="8" height="2" fill="#d4d4d4"/><rect x="10" y="227.4" width="4" height="2" fill="#569cd6"/><rect x="15" y="227.4" width="22" height="2" fill="#ce9178"/><rect x="38" y="227.4" width="3" height="2" fill="#569cd6"/><rect x="42" y="227.4" width="5" height="2" fill="#569cd6"/><rect x="1" y="229.4" width="8" height="2" fill="#d4d4d4"/><rect x="10" y="229.4" width="4" height="2" fill="#569cd6"/><rect x="15" y="229.4" width="5" height="2" fill="#569cd6"/><rect x="1" y="231.4" width="7" height="2" fill="#569cd6"/><rect x="9" y="231.4" width="3" height="2" fill="#569cd6"/><rect x="13" y="231.4" width="11" height="2" fill="#d4d4d4"/><rect x="2" y="239.4" width="10" height="2" fill="#569cd6"/><rect x="13" y="239.4" width="12" height="2" fill="#d4d4d4"/><rect x="2" y="241.4" width="7" height="2" fill="#569cd6"/><rect x="10" y="241.4" width="3" height="2" fill="#569cd6"/><rect x="14" y="241.4" width="12" height="2" fill="#d4d4d4"/><rect x="2" y="243.4" width="10" height="2" fill="#569cd6"/><rect x="13" y="243.4" width="12" height="2" fill="#d4d4d4"/><rect x="2" y="245.4" width="2" height="2" fill="#569cd6"/><rect x="5" y="245.4" width="6" height="2" fill="#569cd6"/><rect x="12" y="245.4" width="12" height="2" fill="#d4d4d4"/><rect x="2" y="247.4" width="2" height="2" fill="#569cd6"/><rect x="5" y="247.4" width="6" height="2" fill="#569cd6"/><rect x="12" y="247.4" width="12" height="2" fill="#d4d4d4"/><rect x="0" y="251.4" width="1" height="2" fill="#d4d4d4"/><rect x="0" y="253.4" width="6" height="2" fill="#d4d4d4"/><rect x="7" y="253.4" width="1" height="2" fill="#d4d4d4"/><rect x="9" y="253.4" width="6" height="2" fill="#d4d4d4"/><rect x="0" y="255.4" width="7" height="2" fill="#d4d4d4"/><rect x="8" y="255.4" width="13" height="2" fill="#d4d4d4"/><rect x="0" y="259.4" width="4" height="2" fill="#d4d4d4"/><rect x="5" y="259.4" width="9" height="2" fill="#d4d4d4"/><rect x="0" y="263.4" width="2" height="2" fill="#6a9955"/><rect x="3" y="263.4" width="49" height="2" fill="#6a9955"/><rect x="0" y="265.4" width="2" height="2" fill="#6a9955"/><rect x="3" y="265.4" width="5" height="2" fill="#6a9955"/><rect x="9" y="265.4" width="10" height="2" fill="#6a9955"/><rect x="0" y="267.4" width="2" height="2" fill="#6a9955"/><rect x="3" y="267.4" width="52" height="2" fill="#6a9955"/><rect x="0" y="269.4" width="5" height="2" fill="#569cd6"/><rect x="6" y="269.4" width="12" height="2" fill="#569cd6"/><rect x="0" y="271.4" width="6" height="2" fill="#569cd6"/><rect x="7" y="271.4" width="4" height="2" fill="#569cd6"/><rect x="12" y="271.4" width="8" height="2" fill="#d4d4d4"/><rect x="0" y="273.4" width="112" height="2" fill="#d4d4d4"/><rect x="0" y="275.4" width="6" height="2" fill="#569cd6"/><rect x="0" y="277.4" width="1" height="2" fill="#d4d4d4"/><rect x="1" y="277.4" width="4" height="2" fill="#569cd6"/><rect x="5" y="277.4" width="1" height="2" fill="#d4d4d4"/><rect x="7" y="277.4" width="4" height="2" fill="#569cd6"/><rect x="11" y="277.4" width="1" height="2" fill="#d4d4d4"/><rect x="13" y="277.4" width="4" height="2" fill="#569cd6"/><rect x="17" y="277.4" width="1" height="2" fill="#d4d4d4"/><rect x="19" y="277.4" width="9" height="2" fill="#ce9178"/><rect x="29" y="277.4" width="12" height="2" fill="#ce9178"/><rect x="42" y="277.4" width="16" height="2" fill="#ce9178"/><rect x="59" y="277.4" width="8" height="2" fill="#ce9178"/><rect x="68" y="277.4" width="5" height="2" fill="#ce9178"/><rect x="74" y="277.4" width="12" height="2" fill="#b5cea8"/><rect x="87" y="277.4" width="15" height="2" fill="#ce9178"/><rect x="103" y="277.4" width="9" height="2" fill="#ce9178"/><rect x="0" y="279.4" width="1" height="2" fill="#d4d4d4"/><rect x="1" y="279.4" width="4" height="2" fill="#569cd6"/><rect x="5" y="279.4" width="1" height="2" fill="#d4d4d4"/><rect x="7" y="279.4" width="4" height="2" fill="#569cd6"/><rect x="11" y="279.4" width="1" height="2" fill="#d4d4d4"/><rect x="13" y="279.4" width="4" height="2" fill="#569cd6"/><rect x="17" y="279.4" width="1" height="2" fill="#d4d4d4"/><rect x="19" y="279.4" width="12" height="2" fill="#ce9178"/><rect x="32" y="279.4" width="13" height="2" fill="#ce9178"/><rect x="46" y="279.4" width="15" height="2" fill="#ce9178"/><rect x="62" y="279.4" width="11" height="2" fill="#ce9178"/><rect x="74" y="279.4" width="5" height="2" fill="#ce9178"/><rect x="80" y="279.4" width="12" height="2" fill="#b5cea8"/><rect x="93" y="279.4" width="13" height="2" fill="#ce9178"/><rect x="107" y="279.4" width="5" height="2" fill="#ce9178"/><rect x="0" y="281.4" width="1" height="2" fill="#d4d4d4"/><rect x="1" y="281.4" width="4" height="2" fill="#569cd6"/><rect x="5" y="281.4" width="1" height="2" fill="#d4d4d4"/><rect x="7" y="281.4" width="4" height="2" fill="#569cd6"/><rect x="11" y="281.4" width="1" height="2" fill="#d4d4d4"/><rect x="13" y="281.4" width="4" height="2" fill="#569cd6"/><rect x="17" y="281.4" width="1" height="2" fill="#d4d4d4"/><rect x="19" y="281.4" width="11" height="2" fill="#ce9178"/><rect x="31" y="281.4" width="10" height="2" fill="#ce9178"/><rect x="42" y="281.4" width="12" height="2" fill="#ce9178"/><rect x="55" y="281.4" width="9" height="2" fill="#ce9178"/><rect x="65" y="281.4" width="5" height="2" fill="#ce9178"/><rect x="71" y="281.4" width="12" height="2" fill="#b5cea8"/><rect x="84" y="281.4" width="12" height="2" fill="#ce9178"/><rect x="97" y="281.4" width="13" height="2" fill="#ce9178"/><rect x="111" y="281.4" width="1" height="2" fill="#ce9178"/><rect x="0" y="283.4" width="1" height="2" fill="#d4d4d4"/><rect x="1" y="283.4" width="4" height="2" fill="#569cd6"/><rect x="5" y="283.4" width="1" height="2" fill="#d4d4d4"/><rect x="7" y="283.4" width="4" height="2" fill="#569cd6"/><rect x="11" y="283.4" width="1" height="2" fill="#d4d4d4"/><rect x="13" y="283.4" width="4" height="2" fill="#569cd6"/><rect x="17" y="283.4" width="1" height="2" fill="#d4d4d4"/><rect x="19" y="283.4" width="13" height="2" fill="#ce9178"/><rect x="33" y="283.4" width="11" height="2" fill="#ce9178"/><rect x="45" y="283.4" width="13" height="2" fill="#ce9178"/><rect x="59" y="283.4" width="11" height="2" fill="#ce9178"/><rect x="71" y="283.4" width="5" height="2" fill="#ce9178"/><rect x="77" y="283.4" width="12" height="2" fill="#b5cea8"/><rect x="90" y="283.4" width="13" height="2" fill="#ce9178"/><rect x="104" y="283.4" width="8" height="2" fill="#ce9178"/><rect x="0" y="285.4" width="1" height="2" fill="#d4d4d4"/><rect x="1" y="285.4" width="4" height="2" fill="#569cd6"/><rect x="5" y="285.4" width="1" height="2" fill="#d4d4d4"/><rect x="7" y="285.4" width="4" height="2" fill="#569cd6"/><rect x="11" y="285.4" width="1" height="2" fill="#d4d4d4"/><rect x="13" y="285.4" width="4" height="2" fill="#569cd6"/><rect x="17" y="285.4" width="1" height="2" fill="#d4d4d4"/><rect x="19" y="285.4" width="9" height="2" fill="#ce9178"/><rect x="29" y="285.4" width="12" height="2" fill="#ce9178"/><rect x="42" y="285.4" width="14" height="2" fill="#ce9178"/><rect x="57" y="285.4" width="9" height="2" fill="#ce9178"/><rect x="67" y="285.4" width="5" height="2" fill="#ce9178"/><rect x="73" y="285.4" width="12" height="2" fill="#b5cea8"/><rect x="86" y="285.4" width="13" height="2" fill="#ce9178"/><rect x="100" y="285.4" width="12" height="2" fill="#ce9178"/><rect x="0" y="287.4" width="1" height="2" fill="#d4d4d4"/><rect x="1" y="287.4" width="4" height="2" fill="#569cd6"/><rect x="5" y="287.4" width="1" height="2" fill="#d4d4d4"/><rect x="7" y="287.4" width="4" height="2" fill="#569cd6"/><rect x="11" y="287.4" width="1" height="2" fill="#d4d4d4"/><rect x="13" y="287.4" width="4" height="2" fill="#569cd6"/><rect x="17" y="287.4" width="1" height="2" fill="#d4d4d4"/><rect x="19" y="287.4" width="12" height="2" fill="#ce9178"/><rect x="32" y="287.4" width="8" height="2" fill="#ce9178"/><rect x="41" y="287.4" width="16" height="2" fill="#ce9178"/><rect x="58" y="287.4" width="8" height="2" fill="#ce9178"/><rect x="67" y="287.4" width="5" height="2" fill="#ce9178"/><rect x="73" y="287.4" width="12" height="2" fill="#b5cea8"/><rect x="86" y="287.4" width="15" height="2" fill="#ce9178"/><rect x="102" y="287.4" width="10" height="2" fill="#ce9178"/><rect x="0" y="289.4" width="1" height="2" fill="#d4d4d4"/><rect x="1" y="289.4" width="4" height="2" fill="#569cd6"/><rect x="5" y="289.4" width="1" height="2" fill="#d4d4d4"/><rect x="7" y="289.4" width="4" height="2" fill="#569cd6"/><rect x="11" y="289.4" width="1" height="2" fill="#d4d4d4"/><rect x="13" y="289.4" width="4" height="2" fill="#569cd6"/><rect x="17" y="289.4" width="1" height="2" fill="#d4d4d4"/><rect x="19" y="289.4" width="11" height="2" fill="#ce9178"/><rect x="31" y="289.4" width="13" height="2" fill="#ce9178"/><rect x="45" y="289.4" width="13" height="2" fill="#ce9178"/><rect x="59" y="289.4" width="12" height="2" fill="#ce9178"/><rect x="72" y="289.4" width="5" height="2" fill="#ce9178"/><rect x="78" y="289.4" width="12" height="2" fill="#b5cea8"/><rect x="91" y="289.4" width="14" height="2" fill="#ce9178"/><rect x="106" y="289.4" width="6" height="2" fill="#ce9178"/><rect x="0" y="291.4" width="1" height="2" fill="#d4d4d4"/><rect x="1" y="291.4" width="4" height="2" fill="#569cd6"/><rect x="5" y="291.4" width="1" height="2" fill="#d4d4d4"/><rect x="7" y="291.4" width="4" height="2" fill="#569cd6"/><rect x="11" y="291.4" width="1" height="2" fill="#d4d4d4"/><rect x="13" y="291.4" width="4" height="2" fill="#569cd6"/><rect x="17" y="291.4" width="1" height="2" fill="#d4d4d4"/><rect x="19" y="291.4" width="9" height="2" fill="#ce9178"/><rect x="29" y="291.4" width="8" height="2" fill="#ce9178"/><rect x="38" y="291.4" width="13" height="2" fill="#ce9178"/><rect x="52" y="291.4" width="11" height="2" fill="#ce9178"/><rect x="64" y="291.4" width="5" height="2" fill="#ce9178"/><rect x="70" y="291.4" width="12" height="2" fill="#b5cea8"/><rect x="83" y="291.4" width="11" height="2" fill="#ce9178"/><rect x="95" y="291.4" width="13" height="2" fill="#ce9178"/><rect x="109" y="291.4" width="3" height="2" fill="#ce9178"/><rect x="0" y="293.4" width="1" height="2" fill="#d4d4d4"/><rect x="1" y="293.4" width="4" height="2" fill="#569cd6"/><rect x="5" y="293.4" width="1" height="2" fill="#d4d4d4"/><rect x="7" y="293.4" width="4" height="2" fill="#569cd6"/><rect x="11" y="293.4" width="1" height="2" fill="#d4d4d4"/><rect x="13" y="293.4" width="4" height="2" fill="#569cd6"/><rect x="17" y="293.4" width="1" height="2" fill="#d4d4d4"/><rect x="19" y="293.4" width="14" height="2" fill="#ce9178"/><rect x="34" y="293.4" width="12" height="2" fill="#ce9178"/><rect x="47" y="293.4" width="16" height="2" fill="#ce9178"/><rect x="64" y="293.4" width="11" height="2" fill="#ce9178"/><rect x="76" y="293.4" width="5" height="2" fill="#ce9178"/><rect x="82" y="293.4" width="12" height="2" fill="#b5cea8"/><rect x="95" y="293.4" width="13" height="2" fill="#ce9178"/><rect x="109" y="293.4" width="3" height="2" fill="#ce9178"/><rect x="0" y="295.4" width="1" height="2" fill="#d4d4d4"/><rect x="1" y="295.4" width="4" height="2" fill="#569cd6"/><rect x="5" y="295.4" width="1" height="2" fill="#d4d4d4"/><rect x="7" y="295.4" width="4" height="2" fill="#569cd6"/><rect x="11" y="295.4" width="1" height="2" fill="#d4d4d4"/><rect x="13" y="295.4" width="4" height="2" fill="#569cd6"/><rect x="17" y="295.4" width="1" height="2" fill="#d4d4d4"/><rect x="19" y="295.4" width="9" height="2" fill="#ce9178"/><rect x="29" y="295.4" width="11" height="2" fill="#ce9178"/><rect x="41" y="295.4" width="13" height="2" fill="#ce9178"/><rect x="55" y="295.4" width="9" height="2" fill="#ce9178"/><rect x="65" y="295.4" width="5" height="2" fill="#ce9178"/><rect x="71" y="295.4" width="12" height="2" fill="#b5cea8"/><rect x="84" y="295.4" width="15" height="2" fill="#ce9178"/><rect x="100" y="295.4" width="12" height="2" fill="#ce9178"/><rect x="0" y="297.4" width="1" height="2" fill="#d4d4d4"/><rect x="1" y="297.4" width="4" height="2" fill="#569cd6"/><rect x="5" y="297.4" width="1" height="2" fill="#d4d4d4"/><rect x="7" y="297.4" width="4" height="2" fill="#569cd6"/><rect x="11" y="297.4" width="1" height="2" fill="#d4d4d4"/><rect x="13" y="297.4" width="4" height="2" fill="#569cd6"/><rect x="17" y="297.4" width="1" height="2" fill="#d4d4d4"/><rect x="19" y="297.4" width="9" height="2" fill="#ce9178"/><rect x="29" y="297.4" width="9" height="2" fill="#ce9178"/><rect x="39" y="297.4" width="17" height="2" fill="#ce9178"/><rect x="57" y="297.4" width="10" height="2" fill="#ce9178"/><rect x="68" y="297.4" width="5" height="2" fill="#ce9178"/><rect x="74" y="297.4" width="12" height="2" fill="#b5cea8"/><rect x="87" y="297.4" width="12" height="2" fill="#ce9178"/><rect x="100" y="297.4" width="12" height="2" fill="#ce9178"/><rect x="0" y="299.4" width="1" height="2" fill="#d4d4d4"/><rect x="1" y="299.4" width="4" height="2" fill="#569cd6"/><rect x="5" y="299.4" width="1" height="2" fill="#d4d4d4"/><rect x="7" y="299.4" width="4" height="2" fill="#569cd6"/><rect x="11" y="299.4" width="1" height="2" fill="#d4d4d4"/><rect x="13" y="299.4" width="4" height="2" fill="#569cd6"/><rect x="17" y="299.4" width="1" height="2" fill="#d4d4d4"/><rect x="19" y="299.4" width="12" height="2" fill="#ce9178"/><rect x="32" y="299.4" width="11" height="2" fill="#ce9178"/><rect x="44" y="299.4" width="11" height="2" fill="#ce9178"/><rect x="56" y="299.4" width="9" height="2" fill="#ce9178"/><rect x="66" y="299.4" width="5" height="2" fill="#ce9178"/><rect x="72" y="299.4" width="12" height="2" fill="#b5cea8"/><rect x="85" y="299.4" width="14" height="2" fill="#ce9178"/><rect x="100" y="299.4" width="12" height="2" fill="#ce9178"/><rect x="0" y="301.4" width="1" height="2" fill="#d4d4d4"/><rect x="1" y="301.4" width="4" height="2" fill="#569cd6"/><rect x="5" y="301.4" width="1" height="2" fill="#d4d4d4"/><rect x="7" y="301.4" width="4" height="2" fill="#569cd6"/><rect x="11" y="301.4" width="1" height="2" fill="#d4d4d4"/><rect x="13" y="301.4" width="4" height="2" fill="#569cd6"/><rect x="17" y="301.4" width="1" height="2" fill="#d4d4d4"/><rect x="19" y="301.4" width="10" height="2" fill="#ce9178"/><rect x="30" y="301.4" width="11" height="2" fill="#ce9178"/><rect x="42" y="301.4" width="17" height="2" fill="#ce9178"/><rect x="60" y="301.4" width="12" height="2" fill="#ce9178"/><rect x="73" y="301.4" width="5" height="2" fill="#ce9178"/><rect x="79" y="301.4" width="12" height="2" fill="#b5cea8"/><rect x="92" y="301.4" width="13" height="2" fill="#ce9178"/><rect x="106" y="301.4" width="6" height="2" fill="#ce9178"/><rect x="0" y="303.4" width="1" height="2" fill="#d4d4d4"/><rect x="1" y="303.4" width="4" height="2" fill="#569cd6"/><rect x="5" y="303.4" width="1" height="2" fill="#d4d4d4"/><rect x="7" y="303.4" width="4" height="2" fill="#569cd6"/><rect x="11" y="303.4" width="1" height="2" fill="#d4d4d4"/><rect x="13" y="303.4" width="4" height="2" fill="#569cd6"/><rect x="17" y="303.4" width="1" height="2" fill="#d4d4d4"/><rect x="19" y="303.4" width="14" height="2" fill="#ce9178"/><rect x="34" y="303.4" width="11" height="2" fill="#ce9178"/><rect x="46" y="303.4" width="12" height="2" fill="#ce9178"/><rect x="59" y="303.4" width="9" height="2" fill="#ce9178"/><rect x="69" y="303.4" width="5" height="2" fill="#ce9178"/><rect x="75" y="303.4" width="12" height="2" fill="#b5cea8"/><rect x="88" y="303.4" width="11" height="2" fill="#ce9178"/><rect x="100" y="303.4" width="12" height="2" fill="#ce9178"/><rect x="0" y="305.4" width="1" height="2" fill="#d4d4d4"/><rect x="1" y="305.4" width="4" height="2" fill="#569cd6"/><rect x="5" y="305.4" width="1" height="2" fill="#d4d4d4"/><rect x="7" y="305.4" width="4" height="2" fill="#569cd6"/><rect x="11" y="305.4" width="1" height="2" fill="#d4d4d4"/><rect x="13" y="305.4" width="4" height="2" fill="#569cd6"/><rect x="17" y="305.4" width="1" height="2" fill="#d4d4d4"/><rect x="19" y="305.4" width="10" height="2" fill="#ce9178"/><rect x="30" y="305.4" width="13" height="2" fill="#ce9178"/><rect x="44" y="305.4" width="12" height="2" fill="#ce9178"/><rect x="57" y="305.4" width="8" height="2" fill="#ce9178"/><rect x="66" y="305.4" width="5" height="2" fill="#ce9178"/><rect x="72" y="305.4" width="12" height="2" fill="#b5cea8"/><rect x="85" y="305.4" width="14" height="2" fill="#ce9178"/><rect x="100" y="305.4" width="12" height="2" fill="#ce9178"/><rect x="0" y="309.4" width="7" height="2" fill="#569cd6"/><rect x="0" y="313.4" width="2" height="2" fill="#6a9955"/><rect x="3" y="313.4" width="49" height="2" fill="#6a9955"/><rect x="0" y="315.4" width="2" height="2" fill="#6a9955"/><rect x="3" y="315.4" width="5" height="2" fill="#6a9955"/><rect x="9" y="315.4" width="10" height="2" fill="#6a9955"/><rect x="0" y="317.4" width="2" height="2" fill="#6a9955"/><rect x="3" y="317.4" width="52" height="2" fill="#6a9955"/><rect x="0" y="319.4" width="5" height="2" fill="#569cd6"/><rect x="6" y="319.4" width="12" height="2" fill="#569cd6"/><rect x="0" y="321.4" width="6" height="2" fill="#569cd6"/><rect x="7" y="321.4" width="4" height="2" fill="#569cd6"/><rect x="12" y="321.4" width="8" height="2" fill="#d4d4d4"/><rect x="0" y="323.4" width="42" height="2" fill="#d4d4d4"/><rect x="0" y="325.4" width="6" height="2" fill="#569cd6"/><rect x="0" y="327.4" width="1" height="2" fill="#d4d4d4"/><rect x="1" y="327.4" width="4" height="2" fill="#569cd6"/><rect x="5" y="327.4" width="1" height="2" fill="#d4d4d4"/><rect x="7" y="327.4" width="3" height="2" fill="#d4d4d4"/><rect x="11" y="327.4" width="12" height="2" fill="#ce9178"/><rect x="23" y="327.4" width="1" height="2" fill="#d4d4d4"/><rect x="25" y="327.4" width="6" height="2" fill="#b5cea8"/><rect x="31" y="327.4" width="1" height="2" fill="#ce9178"/><rect x="33" y="327.4" width="13" height="2" fill="#ce9178"/><rect x="0" y="329.4" width="1" height="2" fill="#d4d4d4"/><rect x="1" y="329.4" width="4" height="2" fill="#569cd6"/><rect x="5" y="329.4" width="1" height="2" fill="#d4d4d4"/><rect x="7" y="329.4" width="3" height="2" fill="#d4d4d4"/><rect x="11" y="329.4" width="14" height="2" fill="#ce9178"/><rect x="25" y="329.4" width="1" height="2" fill="#d4d4d4"/><rect x="27" y="329.4" width="8" height="2" fill="#b5cea8"/><rect x="35" y="329.4" width="1" height="2" fill="#ce9178"/><rect x="37" y="329.4" width="19" height="2" fill="#ce9178"/><rect x="0" y="331.4" width="1" height="2" fill="#d4d4d4"/><rect x="1" y="331.4" width="4" height="2" fill="#569cd6"/><rect x="5" y="331.4" width="1" height="2" fill="#d4d4d4"/><rect x="7" y="331.4" width="2" height="2" fill="#d4d4d4"/><rect x="10" y="331.4" width="15" height="2" fill="#ce9178"/><rect x="25" y="331.4" width="1" height="2" fill="#d4d4d4"/><rect x="27" y="331.4" width="10" height="2" fill="#b5cea8"/><rect x="37" y="331.4" width="1" height="2" fill="#ce9178"/><rect x="39" y="331.4" width="10" height="2" fill="#ce9178"/><rect x="0" y="333.4" width="1" height="2" fill="#d4d4d4"/><rect x="1" y="333.4" width="4" height="2" fill="#569cd6"/><rect x="5" y="333.4" width="1" height="2" fill="#d4d4d4"/><rect x="7" y="333.4" width="3" height="2" fill="#d4d4d4"/><rect x="11" y="333.4" width="16" height="2" fill="#ce9178"/><rect x="27" y="333.4" width="1" height="2" fill="#d4d4d4"/><rect x="29" y="333.4" width="10" height="2" fill="#b5cea8"/><rect x="39" y="333.4" width="1" height="2" fill="#ce9178"/><rect x="41" y="333.4" width="21" height="2" fill="#ce9178"/><rect x="0" y="335.4" width="1" height="2" fill="#d4d4d4"/><rect x="1" y="335.4" width="4" height="2" fill="#569cd6"/><rect x="5" y="335.4" width="1" height="2" fill="#d4d4d4"/><rect x="7" y="335.4" width="3" height="2" fill="#d4d4d4"/><rect x="11" y="335.4" width="13" height="2" fill="#ce9178"/><rect x="24" y="335.4" width="1" height="2" fill="#d4d4d4"/><rect x="26" y="335.4" width="9" height="2" fill="#b5cea8"/><rect x="35" y="335.4" width="1" height="2" fill="#ce9178"/><rect x="37" y="335.4" width="12" height="2" fill="#ce9178"/><rect x="0" y="337.4" width="1" height="2" fill="#d4d4d4"/><rect x="1" y="337.4" width="4" height="2" fill="#569cd6"/><rect x="5" y="337.4" width="1" height="2" fill="#d4d4d4"/><rect x="7" y="337.4" width="3" height="2" fill="#d4d4d4"/><rect x="11" y="337.4" width="15" height="2" fill="#ce9178"/><rect x="26" y="337.4" width="1" height="2" fill="#d4d4d4"/><rect x="28" y="337.4" width="9" height="2" fill="#b5cea8"/><rect x="37" y="337.4" width="1" height="2" fill="#ce9178"/><rect x="39" y="337.4" width="10" height="2" fill="#ce9178"/><rect x="0" y="339.4" width="1" height="2" fill="#d4d4d4"/><rect x="1" y="339.4" width="4" height="2" fill="#569cd6"/><rect x="5" y="339.4" width="1" height="2" fill="#d4d4d4"/><rect x="7" y="339.4" width="2" height="2" fill="#d4d4d4"/><rect x="10" y="339.4" width="10" height="2" fill="#ce9178"/><rect x="20" y="339.4" width="1" height="2" fill="#d4d4d4"/><rect x="22" y="339.4" width="7" height="2" fill="#b5cea8"/><rect x="29" y="339.4" width="1" height="2" fill="#ce9178"/><rect x="31" y="339.4" width="23" height="2" fill="#ce9178"/><rect x="0" y="341.4" width="1" height="2" fill="#d4d4d4"/><rect x="1" y="341.4" width="4" height="2" fill="#569cd6"/><rect x="5" y="341.4" width="1" height="2" fill="#d4d4d4"/><rect x="7" y="341.4" width="2" height="2" fill="#d4d4d4"/><rect x="10" y="341.4" width="10" height="2" fill="#ce9178"/><rect x="20" y="341.4" width="1" height="2" fill="#d4d4d4"/><rect x="22" y="341.4" width="8" height="2" fill="#b5cea8"/><rect x="30" y="341.4" width="1" height="2" fill="#ce9178"/><rect x="32" y="341.4" width="10" height="2" fill="#ce9178"/><rect x="0" y="343.4" width="1" height="2" fill="#d4d4d4"/><rect x="1" y="343.4" width="4" height="2" fill="#569cd6"/><rect x="5" y="343.4" width="1" height="2" fill="#d4d4d4"/><rect x="7" y="343.4" width="2" height="2" fill="#d4d4d4"/><rect x="10" y="343.4" width="10" height="2" fill="#ce9178"/><rect x="20" y="343.4" width="1" height="2" fill="#d4d4d4"/><rect x="22" y="343.4" width="10" height="2" fill="#b5cea8"/><rect x="32" y="343.4" width="1" height="2" fill="#ce9178"/><rect x="34" y="343.4" width="13" height="2" fill="#ce9178"/><rect x="0" y="345.4" width="1" height="2" fill="#d4d4d4"/><rect x="1" y="345.4" width="4" height="2" fill="#569cd6"/><rect x="5" y="345.4" width="1" height="2" fill="#d4d4d4"/><rect x="7" y="345.4" width="2" height="2" fill="#d4d4d4"/><rect x="10" y="345.4" width="12" height="2" fill="#ce9178"/><rect x="22" y="345.4" width="1" height="2" fill="#d4d4d4"/><rect x="24" y="345.4" width="10" height="2" fill="#b5cea8"/><rect x="34" y="345.4" width="1" height="2" fill="#ce9178"/><rect x="36" y="345.4" width="9" height="2" fill="#ce9178"/><rect x="0" y="347.4" width="1" height="2" fill="#d4d4d4"/><rect x="1" y="347.4" width="4" height="2" fill="#569cd6"/><rect x="5" y="347.4" width="1" height="2" fill="#d4d4d4"/><rect x="7" y="347.4" width="2" height="2" fill="#d4d4d4"/><rect x="10" y="347.4" width="16" height="2" fill="#ce9178"/><rect x="26" y="347.4" width="1" height="2" fill="#d4d4d4"/><rect x="28" y="347.4" width="7" height="2" fill="#b5cea8"/><rect x="35" y="347.4" width="1" height="2" fill="#ce9178"/><rect x="37" y="347.4" width="21" height="2" fill="#ce9178"/><rect x="0" y="349.4" width="1" height="2" fill="#d4d4d4"/><rect x="1" y="349.4" width="4" height="2" fill="#569cd6"/><rect x="5" y="349.4" width="1" height="2" fill="#d4d4d4"/><rect x="7" y="349.4" width="2" height="2" fill="#d4d4d4"/><rect x="10" y="349.4" width="15" height="2" fill="#ce9178"/><rect x="25" y="349.4" width="1" height="2" fill="#d4d4d4"/><rect x="27" y="349.4" width="8" height="2" fill="#b5cea8"/><rect x="35" y="349.4" width="1" height="2" fill="#ce9178"/><rect x="37" y="349.4" width="20" height="2" fill="#ce9178"/><rect x="0" y="351.4" width="1" height="2" fill="#d4d4d4"/><rect x="1" y="351.4" width="4" height="2" fill="#569cd6"/><rect x="5" y="351.4" width="1" height="2" fill="#d4d4d4"/><rect x="7" y="351.4" width="3" height="2" fill="#d4d4d4"/><rect x="11" y="351.4" width="13" height="2" fill="#ce9178"/><rect x="24" y="351.4" width="1" height="2" fill="#d4d4d4"/><rect x="26" y="351.4" width="6" height="2" fill="#b5cea8"/><rect x="32" y="351.4" width="1" height="2" fill="#ce9178"/><rect x="34" y="351.4" width="12" height="2" fill="#ce9178"/><rect x="0" y="355.4" width="7" height="2" fill="#569cd6"/><rect x="0" y="361.4" width="2" height="2" fill="#6a9955"/><rect x="3" y="361.4" width="49" height="2" fill="#6a9955"/><rect x="0" y="363.4" width="2" height="2" fill="#6a9955"/><rect x="3" y="363.4" width="5" height="2" fill="#6a9955"/><rect x="9" y="363.4" width="10" height="2" fill="#6a9955"/><rect x="0" y="365.4" width="2" height="2" fill="#6a9955"/><rect x="3" y="365.4" width="52" height="2" fill="#6a9955"/><rect x="0" y="367.4" width="5" height="2" fill="#569cd6"/><rect x="6" y="367.4" width="12" height="2" fill="#569cd6"/><rect x="0" y="369.4" width="6" height="2" fill="#569cd6"/><rect x="7" y="369.4" width="4" height="2" fill="#569cd6"/><rect x="12" y="369.4" width="8" height="2" fill="#d4d4d4"/><rect x="0" y="371.4" width="32" height="2" fill="#d4d4d4"/><rect x="0" y="373.4" width="6" height="2" fill="#569cd6"/><rect x="0" y="375.4" width="1" height="2" fill="#d4d4d4"/><rect x="1" y="375.4" width="4" height="2" fill="#569cd6"/><rect x="5" y="375.4" width="1" height="2" fill="#d4d4d4"/><rect x="7" y="375.4" width="4" height="2" fill="#d4d4d4"/><rect x="0" y="377.4" width="1" height="2" fill="#d4d4d4"/><rect x="1" y="377.4" width="4" height="2" fill="#569cd6"/><rect x="5" y="377.4" width="1" height="2" fill="#d4d4d4"/><rect x="7" y="377.4" width="4" height="2" fill="#d4d4d4"/><rect x="0" y="379.4" width="1" height="2" fill="#d4d4d4"/><rect x="1" y="379.4" width="4" height="2" fill="#569cd6"/><rect x="5" y="379.4" width="1" height="2" fill="#d4d4d4"/><rect x="7" y="379.4" width="4" height="2" fill="#d4d4d4"/><rect x="0" y="381.4" width="1" height="2" fill="#d4d4d4"/><rect x="1" y="381.4" width="4" height="2" fill="#569cd6"/><rect x="5" y="381.4" width="1" height="2" fill="#d4d4d4"/><rect x="7" y="381.4" width="4" height="2" fill="#d4d4d4"/><rect x="0" y="383.4" width="1" height="2" fill="#d4d4d4"/><rect x="1" y="383.4" width="4" height="2" fill="#569cd6"/><rect x="5" y="383.4" width="1" height="2" fill="#d4d4d4"/><rect x="7" y="383.4" width="4" height="2" fill="#d4d4d4"/><rect x="0" y="387.4" width="7" height="2" fill="#569cd6"/><rect x="0" y="391.4" width="2" height="2" fill="#6a9955"/><rect x="3" y="391.4" width="49" height="2" fill="#6a9955"/><rect x="0" y="393.4" width="2" height="2" fill="#6a9955"/><rect x="3" y="393.4" width="5" height="2" fill="#6a9955"/><rect x="9" y="393.4" width="10" height="2" fill="#6a9955"/><rect x="0" y="395.4" width="2" height="2" fill="#6a9955"/><rect x="3" y="395.4" width="52" height="2" fill="#6a9955"/><rect x="0" y="397.4" width="5" height="2" fill="#569cd6"/><rect x="6" y="397.4" width="12" height="2" fill="#569cd6"/><rect x="0" y="399.4" width="6" height="2" fill="#569cd6"/><rect x="7" y="399.4" width="4" height="2" fill="#569cd6"/><rect x="12" y="399.4" width="8" height="2" fill="#d4d4d4"/><rect x="0" y="401.4" width="87" height="2" fill="#d4d4d4"/><rect x="0" y="403.4" width="6" height="2" fill="#569cd6"/><rect x="0" y="405.4" width="1" height="2" fill="#d4d4d4"/><rect x="1" y="405.4" width="4" height="2" fill="#569cd6"/><rect x="5" y="405.4" width="1" height="2" fill="#ce9178"/><rect x="7" y="405.4" width="17" height="2" fill="#ce9178"/><rect x="25" y="405.4" width="10" height="2" fill="#ce9178"/><rect x="0" y="407.4" width="1" height="2" fill="#d4d4d4"/><rect x="1" y="407.4" width="4" height="2" fill="#569cd6"/><rect x="5" y="407.4" width="1" height="2" fill="#ce9178"/><rect x="7" y="407.4" width="14" height="2" fill="#ce9178"/><rect x="22" y="407.4" width="10" height="2" fill="#ce9178"/><rect x="0" y="409.4" width="1" height="2" fill="#d4d4d4"/><rect x="1" y="409.4" width="4" height="2" fill="#569cd6"/><rect x="5" y="409.4" width="1" height="2" fill="#ce9178"/><rect x="7" y="409.4" width="14" height="2" fill="#ce9178"/><rect x="22" y="409.4" width="10" height="2" fill="#ce9178"/><rect x="0" y="411.4" width="1" height="2" fill="#d4d4d4"/><rect x="1" y="411.4" width="4" height="2" fill="#569cd6"/><rect x="5" y="411.4" width="1" height="2" fill="#ce9178"/><rect x="7" y="411.4" width="14" height="2" fill="#ce9178"/><rect x="22" y="411.4" width="10" height="2" fill="#ce9178"/><rect x="0" y="413.4" width="1" height="2" fill="#d4d4d4"/><rect x="1" y="413.4" width="4" height="2" fill="#569cd6"/><rect x="5" y="413.4" width="1" height="2" fill="#ce9178"/><rect x="7" y="413.4" width="14" height="2" fill="#ce9178"/><rect x="22" y="413.4" width="10" height="2" fill="#ce9178"/><rect x="0" y="417.4" width="7" height="2" fill="#569cd6"/><rect x="0" y="423.4" width="2" height="2" fill="#6a9955"/><rect x="3" y="423.4" width="49" height="2" fill="#6a9955"/><rect x="0" y="425.4" width="2" height="2" fill="#6a9955"/><rect x="3" y="425.4" width="5" height="2" fill="#6a9955"/><rect x="9" y="425.4" width="10" height="2" fill="#6a9955"/><rect x="0" y="427.4" width="2" height="2" fill="#6a9955"/><rect x="3" y="427.4" width="52" height="2" fill="#6a9955"/><rect x="0" y="429.4" width="5" height="2" fill="#569cd6"/><rect x="6" y="429.4" width="12" height="2" fill="#569cd6"/><rect x="0" y="431.4" width="6" height="2" fill="#569cd6"/><rect x="7" y="431.4" width="4" height="2" fill="#569cd6"/><rect x="12" y="431.4" width="8" height="2" fill="#d4d4d4"/><rect x="0" y="433.4" width="34" height="2" fill="#d4d4d4"/><rect x="0" y="435.4" width="6" height="2" fill="#569cd6"/><rect x="0" y="437.4" width="1" height="2" fill="#d4d4d4"/><rect x="1" y="437.4" width="4" height="2" fill="#569cd6"/><rect x="5" y="437.4" width="1" height="2" fill="#d4d4d4"/><rect x="7" y="437.4" width="3" height="2" fill="#d4d4d4"/><rect x="11" y="437.4" width="14" height="2" fill="#ce9178"/><rect x="0" y="439.4" width="1" height="2" fill="#d4d4d4"/><rect x="1" y="439.4" width="4" height="2" fill="#569cd6"/><rect x="5" y="439.4" width="1" height="2" fill="#d4d4d4"/><rect x="7" y="439.4" width="3" height="2" fill="#d4d4d4"/><rect x="11" y="439.4" width="11" height="2" fill="#ce9178"/><rect x="0" y="441.4" width="1" height="2" fill="#d4d4d4"/><rect x="1" y="441.4" width="4" height="2" fill="#569cd6"/><rect x="5" y="441.4" width="1" height="2" fill="#d4d4d4"/><rect x="7" y="441.4" width="3" height="2" fill="#d4d4d4"/><rect x="11" y="441.4" width="12" height="2" fill="#ce9178"/><rect x="0" y="443.4" width="1" height="2" fill="#d4d4d4"/><rect x="1" y="443.4" width="4" height="2" fill="#569cd6"/><rect x="5" y="443.4" width="1" height="2" fill="#d4d4d4"/><rect x="7" y="443.4" width="3" height="2" fill="#d4d4d4"/><rect x="11" y="443.4" width="11" height="2" fill="#ce9178"/><rect x="0" y="445.4" width="1" height="2" fill="#d4d4d4"/><rect x="1" y="445.4" width="4" height="2" fill="#569cd6"/><rect x="5" y="445.4" width="1" height="2" fill="#d4d4d4"/><rect x="7" y="445.4" width="3" height="2" fill="#d4d4d4"/><rect x="11" y="445.4" width="15" height="2" fill="#ce9178"/><rect x="0" y="447.4" width="1" height="2" fill="#d4d4d4"/><rect x="1" y="447.4" width="4" height="2" fill="#569cd6"/><rect x="5" y="447.4" width="1" height="2" fill="#d4d4d4"/><rect x="7" y="447.4" width="3" height="2" fill="#d4d4d4"/><rect x="11" y="447.4" width="14" height="2" fill="#ce9178"/><rect x="0" y="449.4" width="1" height="2" fill="#d4d4d4"/><rect x="1" y="449.4" width="4" height="2" fill="#569cd6"/><rect x="5" y="449.4" width="1" height="2" fill="#d4d4d4"/><rect x="7" y="449.4" width="3" height="2" fill="#d4d4d4"/><rect x="11" y="449.4" width="17" height="2" fill="#ce9178"/><rect x="0" y="451.4" width="1" height="2" fill="#d4d4d4"/><rect x="1" y="451.4" width="4" height="2" fill="#569cd6"/><rect x="5" y="451.4" width="1" height="2" fill="#d4d4d4"/><rect x="7" y="451.4" width="3" height="2" fill="#d4d4d4"/><rect x="11" y="451.4" width="12" height="2" fill="#ce9178"/><rect x="0" y="453.4" width="1" height="2" fill="#d4d4d4"/><rect x="1" y="453.4" width="4" height="2" fill="#569cd6"/><rect x="5" y="453.4" width="1" height="2" fill="#d4d4d4"/><rect x="7" y="453.4" width="3" height="2" fill="#d4d4d4"/><rect x="11" y="453.4" width="18" height="2" fill="#ce9178"/><rect x="0" y="455.4" width="1" height="2" fill="#d4d4d4"/><rect x="1" y="455.4" width="4" height="2" fill="#569cd6"/><rect x="5" y="455.4" width="1" height="2" fill="#d4d4d4"/><rect x="7" y="455.4" width="3" height="2" fill="#d4d4d4"/><rect x="11" y="455.4" width="10" height="2" fill="#ce9178"/><rect x="0" y="457.4" width="1" height="2" fill="#d4d4d4"/><rect x="1" y="457.4" width="4" height="2" fill="#569cd6"/><rect x="5" y="457.4" width="1" height="2" fill="#d4d4d4"/><rect x="7" y="457.4" width="3" height="2" fill="#d4d4d4"/><rect x="11" y="457.4" width="13" height="2" fill="#ce9178"/><rect x="0" y="459.4" width="1" height="2" fill="#d4d4d4"/><rect x="1" y="459.4" width="4" height="2" fill="#569cd6"/><rect x="5" y="459.4" width="1" height="2" fill="#d4d4d4"/><rect x="7" y="459.4" width="3" height="2" fill="#d4d4d4"/><rect x="11" y="459.4" width="18" height="2" fill="#ce9178"/><rect x="0" y="461.4" width="1" height="2" fill="#d4d4d4"/><rect x="1" y="461.4" width="4" height="2" fill="#569cd6"/><rect x="5" y="461.4" width="1" height="2" fill="#d4d4d4"/><rect x="7" y="461.4" width="3" height="2" fill="#d4d4d4"/><rect x="11" y="461.4" width="15" height="2" fill="#ce9178"/><rect x="0" y="463.4" width="1" height="2" fill="#d4d4d4"/><rect x="1" y="463.4" width="4" height="2" fill="#569cd6"/><rect x="5" y="463.4" width="1" height="2" fill="#d4d4d4"/><rect x="7" y="463.4" width="3" height="2" fill="#d4d4d4"/><rect x="11" y="463.4" width="12" height="2" fill="#ce9178"/><rect x="0" y="465.4" width="1" height="2" fill="#d4d4d4"/><rect x="1" y="465.4" width="4" height="2" fill="#569cd6"/><rect x="5" y="465.4" width="1" height="2" fill="#d4d4d4"/><rect x="7" y="465.4" width="3" height="2" fill="#d4d4d4"/><rect x="11" y="465.4" width="18" height="2" fill="#ce9178"/><rect x="0" y="467.4" width="1" height="2" fill="#d4d4d4"/><rect x="1" y="467.4" width="4" height="2" fill="#569cd6"/><rect x="5" y="467.4" width="1" height="2" fill="#d4d4d4"/><rect x="7" y="467.4" width="3" height="2" fill="#d4d4d4"/><rect x="11" y="467.4" width="10" height="2" fill="#ce9178"/><rect x="0" y="469.4" width="1" height="2" fill="#d4d4d4"/><rect x="1" y="469.4" width="4" height="2" fill="#569cd6"/><rect x="5" y="469.4" width="1" height="2" fill="#d4d4d4"/><rect x="7" y="469.4" width="3" height="2" fill="#d4d4d4"/><rect x="11" y="469.4" width="18" height="2" fill="#ce9178"/><rect x="0" y="471.4" width="1" height="2" fill="#d4d4d4"/><rect x="1" y="471.4" width="4" height="2" fill="#569cd6"/><rect x="5" y="471.4" width="1" height="2" fill="#d4d4d4"/><rect x="7" y="471.4" width="3" height="2" fill="#d4d4d4"/><rect x="11" y="471.4" width="14" height="2" fill="#ce9178"/><rect x="0" y="475.4" width="7" height="2" fill="#569cd6"/><rect x="0" y="481.4" width="2" height="2" fill="#6a9955"/><rect x="3" y="481.4" width="49" height="2" fill="#6a9955"/><rect x="0" y="483.4" width="2" height="2" fill="#6a9955"/><rect x="3" y="483.4" width="5" height="2" fill="#6a9955"/><rect x="9" y="483.4" width="10" height="2" fill="#6a9955"/><rect x="0" y="485.4" width="2" height="2" fill="#6a9955"/><rect x="3" y="485.4" width="52" height="2" fill="#6a9955"/><rect x="0" y="487.4" width="5" height="2" fill="#569cd6"/><rect x="6" y="487.4" width="12" height="2" fill="#569cd6"/><rect x="0" y="489.4" width="6" height="2" fill="#569cd6"/><rect x="7" y="489.4" width="4" height="2" fill="#569cd6"/><rect x="12" y="489.4" width="8" height="2" fill="#d4d4d4"/><rect x="0" y="491.4" width="34" height="2" fill="#d4d4d4"/><rect x="0" y="493.4" width="6" height="2" fill="#569cd6"/><rect x="0" y="495.4" width="1" height="2" fill="#d4d4d4"/><rect x="1" y="495.4" width="4" height="2" fill="#569cd6"/><rect x="5" y="495.4" width="1" height="2" fill="#d4d4d4"/><rect x="7" y="495.4" width="3" height="2" fill="#d4d4d4"/><rect x="11" y="495.4" width="11" height="2" fill="#ce9178"/><rect x="0" y="497.4" width="1" height="2" fill="#d4d4d4"/><rect x="1" y="497.4" width="4" height="2" fill="#569cd6"/><rect x="5" y="497.4" width="1" height="2" fill="#d4d4d4"/><rect x="7" y="497.4" width="3" height="2" fill="#d4d4d4"/><rect x="11" y="497.4" width="14" height="2" fill="#ce9178"/><rect x="0" y="499.4" width="1" height="2" fill="#d4d4d4"/><rect x="1" y="499.4" width="4" height="2" fill="#569cd6"/><rect x="5" y="499.4" width="1" height="2" fill="#d4d4d4"/><rect x="7" y="499.4" width="3" height="2" fill="#d4d4d4"/><rect x="11" y="499.4" width="18" height="2" fill="#ce9178"/><rect x="0" y="501.4" width="1" height="2" fill="#d4d4d4"/><rect x="1" y="501.4" width="4" height="2" fill="#569cd6"/><rect x="5" y="501.4" width="1" height="2" fill="#d4d4d4"/><rect x="7" y="501.4" width="3" height="2" fill="#d4d4d4"/><rect x="11" y="501.4" width="15" height="2" fill="#ce9178"/><rect x="0" y="503.4" width="1" height="2" fill="#d4d4d4"/><rect x="1" y="503.4" width="4" height="2" fill="#569cd6"/><rect x="5" y="503.4" width="1" height="2" fill="#d4d4d4"/><rect x="7" y="503.4" width="3" height="2" fill="#d4d4d4"/><rect x="11" y="503.4" width="12" height="2" fill="#ce9178"/><rect x="0" y="505.4" width="1" height="2" fill="#d4d4d4"/><rect x="1" y="505.4" width="4" height="2" fill="#569cd6"/><rect x="5" y="505.4" width="1" height="2" fill="#d4d4d4"/><rect x="7" y="505.4" width="3" height="2" fill="#d4d4d4"/><rect x="11" y="505.4" width="15" height="2" fill="#ce9178"/><rect x="0" y="507.4" width="1" height="2" fill="#d4d4d4"/><rect x="1" y="507.4" width="4" height="2" fill="#569cd6"/><rect x="5" y="507.4" width="1" height="2" fill="#d4d4d4"/><rect x="7" y="507.4" width="3" height="2" fill="#d4d4d4"/><rect x="11" y="507.4" width="13" height="2" fill="#ce9178"/><rect x="0" y="509.4" width="1" height="2" fill="#d4d4d4"/><rect x="1" y="509.4" width="4" height="2" fill="#569cd6"/><rect x="5" y="509.4" width="1" height="2" fill="#d4d4d4"/><rect x="7" y="509.4" width="3" height="2" fill="#d4d4d4"/><rect x="11" y="509.4" width="18" height="2" fill="#ce9178"/><rect x="0" y="511.4" width="1" height="2" fill="#d4d4d4"/><rect x="1" y="511.4" width="4" height="2" fill="#569cd6"/><rect x="5" y="511.4" width="1" height="2" fill="#d4d4d4"/><rect x="7" y="511.4" width="3" height="2" fill="#d4d4d4"/><rect x="11" y="511.4" width="18" height="2" fill="#ce9178"/><rect x="0" y="515.4" width="7" height="2" fill="#569cd6"/><rect x="0" y="519.4" width="2" height="2" fill="#6a9955"/><rect x="3" y="519.4" width="49" height="2" fill="#6a9955"/><rect x="0" y="521.4" width="2" height="2" fill="#6a9955"/><rect x="3" y="521.4" width="5" height="2" fill="#6a9955"/><rect x="9" y="521.4" width="10" height="2" fill="#6a9955"/><rect x="0" y="523.4" width="2" height="2" fill="#6a9955"/><rect x="3" y="523.4" width="52" height="2" fill="#6a9955"/><rect x="0" y="525.4" width="5" height="2" fill="#569cd6"/><rect x="6" y="525.4" width="12" height="2" fill="#569cd6"/><rect x="0" y="527.4" width="6" height="2" fill="#569cd6"/><rect x="7" y="527.4" width="4" height="2" fill="#569cd6"/><rect x="12" y="527.4" width="8" height="2" fill="#d4d4d4"/><rect x="0" y="529.4" width="97" height="2" fill="#d4d4d4"/><rect x="0" y="531.4" width="6" height="2" fill="#569cd6"/><rect x="0" y="533.4" width="1" height="2" fill="#d4d4d4"/><rect x="1" y="533.4" width="4" height="2" fill="#569cd6"/><rect x="5" y="533.4" width="1" height="2" fill="#ce9178"/><rect x="7" y="533.4" width="23" height="2" fill="#ce9178"/><rect x="31" y="533.4" width="18" height="2" fill="#ce9178"/><rect x="50" y="533.4" width="13" height="2" fill="#ce9178"/><rect x="64" y="533.4" width="23" height="2" fill="#ce9178"/><rect x="88" y="533.4" width="24" height="2" fill="#ce9178"/><rect x="0" y="535.4" width="1" height="2" fill="#d4d4d4"/><rect x="1" y="535.4" width="4" height="2" fill="#569cd6"/><rect x="5" y="535.4" width="1" height="2" fill="#ce9178"/><rect x="7" y="535.4" width="23" height="2" fill="#ce9178"/><rect x="31" y="535.4" width="18" height="2" fill="#ce9178"/><rect x="50" y="535.4" width="13" height="2" fill="#ce9178"/><rect x="64" y="535.4" width="23" height="2" fill="#ce9178"/><rect x="88" y="535.4" width="24" height="2" fill="#ce9178"/><rect x="0" y="537.4" width="1" height="2" fill="#d4d4d4"/><rect x="1" y="537.4" width="4" height="2" fill="#569cd6"/><rect x="5" y="537.4" width="1" height="2" fill="#ce9178"/><rect x="7" y="537.4" width="23" height="2" fill="#ce9178"/><rect x="31" y="537.4" width="18" height="2" fill="#ce9178"/><rect x="50" y="537.4" width="13" height="2" fill="#ce9178"/><rect x="64" y="537.4" width="23" height="2" fill="#ce9178"/><rect x="88" y="537.4" width="24" height="2" fill="#ce9178"/><rect x="0" y="539.4" width="1" height="2" fill="#d4d4d4"/><rect x="1" y="539.4" width="4" height="2" fill="#569cd6"/><rect x="5" y="539.4" width="1" height="2" fill="#ce9178"/><rect x="7" y="539.4" width="23" height="2" fill="#ce9178"/><rect x="31" y="539.4" width="18" height="2" fill="#ce9178"/><rect x="50" y="539.4" width="13" height="2" fill="#ce9178"/><rect x="64" y="539.4" width="23" height="2" fill="#ce9178"/><rect x="88" y="539.4" width="24" height="2" fill="#ce9178"/><rect x="0" y="543.4" width="7" height="2" fill="#569cd6"/><rect x="0" y="551.4" width="2" height="2" fill="#6a9955"/><rect x="3" y="551.4" width="49" height="2" fill="#6a9955"/><rect x="0" y="553.4" width="2" height="2" fill="#6a9955"/><rect x="3" y="553.4" width="5" height="2" fill="#6a9955"/><rect x="9" y="553.4" width="10" height="2" fill="#6a9955"/><rect x="0" y="555.4" width="2" height="2" fill="#6a9955"/><rect x="3" y="555.4" width="52" height="2" fill="#6a9955"/><rect x="0" y="557.4" width="5" height="2" fill="#569cd6"/><rect x="6" y="557.4" width="12" height="2" fill="#569cd6"/><rect x="0" y="559.4" width="6" height="2" fill="#569cd6"/><rect x="7" y="559.4" width="4" height="2" fill="#569cd6"/><rect x="12" y="559.4" width="8" height="2" fill="#d4d4d4"/><rect x="0" y="561.4" width="60" height="2" fill="#d4d4d4"/><rect x="0" y="563.4" width="6" height="2" fill="#569cd6"/><rect x="0" y="565.4" width="1" height="2" fill="#d4d4d4"/><rect x="1" y="565.4" width="4" height="2" fill="#569cd6"/><rect x="5" y="565.4" width="1" height="2" fill="#d4d4d4"/><rect x="7" y="565.4" width="5" height="2" fill="#d4d4d4"/><rect x="0" y="567.4" width="1" height="2" fill="#d4d4d4"/><rect x="1" y="567.4" width="4" height="2" fill="#569cd6"/><rect x="5" y="567.4" width="1" height="2" fill="#d4d4d4"/><rect x="7" y="567.4" width="5" height="2" fill="#d4d4d4"/><rect x="0" y="569.4" width="1" height="2" fill="#d4d4d4"/><rect x="1" y="569.4" width="4" height="2" fill="#569cd6"/><rect x="5" y="569.4" width="1" height="2" fill="#d4d4d4"/><rect x="7" y="569.4" width="5" height="2" fill="#d4d4d4"/><rect x="0" y="571.4" width="1" height="2" fill="#d4d4d4"/><rect x="1" y="571.4" width="4" height="2" fill="#569cd6"/><rect x="5" y="571.4" width="1" height="2" fill="#d4d4d4"/><rect x="7" y="571.4" width="5" height="2" fill="#d4d4d4"/><rect x="0" y="573.4" width="1" height="2" fill="#d4d4d4"/><rect x="1" y="573.4" width="4" height="2" fill="#569cd6"/><rect x="5" y="573.4" width="1" height="2" fill="#d4d4d4"/><rect x="7" y="573.4" width="5" height="2" fill="#d4d4d4"/><rect x="0" y="577.4" width="7" height="2" fill="#569cd6"/><rect x="0" y="581.4" width="2" height="2" fill="#6a9955"/><rect x="3" y="581.4" width="49" height="2" fill="#6a9955"/><rect x="0" y="583.4" width="2" height="2" fill="#6a9955"/><rect x="3" y="583.4" width="5" height="2" fill="#6a9955"/><rect x="9" y="583.4" width="10" height="2" fill="#6a9955"/><rect x="0" y="585.4" width="2" height="2" fill="#6a9955"/><rect x="3" y="585.4" width="52" height="2" fill="#6a9955"/><rect x="0" y="587.4" width="5" height="2" fill="#569cd6"/><rect x="6" y="587.4" width="12" height="2" fill="#569cd6"/><rect x="0" y="589.4" width="6" height="2" fill="#569cd6"/><rect x="7" y="589.4" width="4" height="2" fill="#569cd6"/><rect x="12" y="589.4" width="8" height="2" fill="#d4d4d4"/><rect x="0" y="591.4" width="67" height="2" fill="#d4d4d4"/><rect x="0" y="593.4" width="6" height="2" fill="#569cd6"/><rect x="0" y="595.4" width="1" height="2" fill="#d4d4d4"/><rect x="1" y="595.4" width="4" height="2" fill="#569cd6"/><rect x="5" y="595.4" width="1" height="2" fill="#d4d4d4"/><rect x="7" y="595.4" width="2" height="2" fill="#d4d4d4"/><rect x="10" y="595.4" width="8" height="2" fill="#b5cea8"/><rect x="18" y="595.4" width="1" height="2" fill="#d4d4d4"/><rect x="20" y="595.4" width="6" height="2" fill="#b5cea8"/><rect x="26" y="595.4" width="1" height="2" fill="#d4d4d4"/><rect x="28" y="595.4" width="4" height="2" fill="#569cd6"/><rect x="32" y="595.4" width="2" height="2" fill="#d4d4d4"/><rect x="0" y="597.4" width="1" height="2" fill="#d4d4d4"/><rect x="1" y="597.4" width="4" height="2" fill="#569cd6"/><rect x="5" y="597.4" width="1" height="2" fill="#d4d4d4"/><rect x="7" y="597.4" width="2" height="2" fill="#d4d4d4"/><rect x="10" y="597.4" width="8" height="2" fill="#b5cea8"/><rect x="18" y="597.4" width="1" height="2" fill="#d4d4d4"/><rect x="20" y="597.4" width="6" height="2" fill="#b5cea8"/><rect x="26" y="597.4" width="1" height="2" fill="#d4d4d4"/><rect x="28" y="597.4" width="4" height="2" fill="#569cd6"/><rect x="32" y="597.4" width="2" height="2" fill="#d4d4d4"/><rect x="0" y="599.4" width="1" height="2" fill="#d4d4d4"/><rect x="1" y="599.4" width="4" height="2" fill="#569cd6"/><rect x="5" y="599.4" width="1" height="2" fill="#d4d4d4"/><rect x="7" y="599.4" width="2" height="2" fill="#d4d4d4"/><rect x="10" y="599.4" width="8" height="2" fill="#b5cea8"/><rect x="18" y="599.4" width="1" height="2" fill="#d4d4d4"/><rect x="20" y="599.4" width="6" height="2" fill="#b5cea8"/><rect x="26" y="599.4" width="1" height="2" fill="#d4d4d4"/><rect x="28" y="599.4" width="4" height="2" fill="#569cd6"/><rect x="32" y="599.4" width="2" height="2" fill="#d4d4d4"/><rect x="0" y="601.4" width="1" height="2" fill="#d4d4d4"/><rect x="1" y="601.4" width="4" height="2" fill="#569cd6"/><rect x="5" y="601.4" width="1" height="2" fill="#d4d4d4"/><rect x="7" y="601.4" width="2" height="2" fill="#d4d4d4"/><rect x="10" y="601.4" width="8" height="2" fill="#b5cea8"/><rect x="18" y="601.4" width="1" height="2" fill="#d4d4d4"/><rect x="20" y="601.4" width="6" height="2" fill="#b5cea8"/><rect x="26" y="601.4" width="1" height="2" fill="#d4d4d4"/><rect x="28" y="601.4" width="4" height="2" fill="#569cd6"/><rect x="32" y="601.4" width="2" height="2" fill="#d4d4d4"/><rect x="0" y="603.4" width="1" height="2" fill="#d4d4d4"/><rect x="1" y="603.4" width="4" height="2" fill="#569cd6"/><rect x="5" y="603.4" width="1" height="2" fill="#d4d4d4"/><rect x="7" y="603.4" width="2" height="2" fill="#d4d4d4"/><rect x="10" y="603.4" width="8" height="2" fill="#b5cea8"/><rect x="18" y="603.4" width="1" height="2" fill="#d4d4d4"/><rect x="20" y="603.4" width="6" height="2" fill="#b5cea8"/><rect x="26" y="603.4" width="1" height="2" fill="#d4d4d4"/><rect x="28" y="603.4" width="4" height="2" fill="#569cd6"/><rect x="32" y="603.4" width="2" height="2" fill="#d4d4d4"/><rect x="0" y="605.4" width="1" height="2" fill="#d4d4d4"/><rect x="1" y="605.4" width="4" height="2" fill="#569cd6"/><rect x="5" y="605.4" width="1" height="2" fill="#d4d4d4"/><rect x="7" y="605.4" width="2" height="2" fill="#d4d4d4"/><rect x="10" y="605.4" width="8" height="2" fill="#b5cea8"/><rect x="18" y="605.4" width="1" height="2" fill="#d4d4d4"/><rect x="20" y="605.4" width="6" height="2" fill="#b5cea8"/><rect x="26" y="605.4" width="1" height="2" fill="#d4d4d4"/><rect x="28" y="605.4" width="4" height="2" fill="#569cd6"/><rect x="32" y="605.4" width="1" height="2" fill="#ce9178"/><rect x="34" y="605.4" width="56" height="2" fill="#ce9178"/><rect x="0" y="607.4" width="1" height="2" fill="#d4d4d4"/><rect x="1" y="607.4" width="4" height="2" fill="#569cd6"/><rect x="5" y="607.4" width="1" height="2" fill="#d4d4d4"/><rect x="7" y="607.4" width="2" height="2" fill="#d4d4d4"/><rect x="10" y="607.4" width="8" height="2" fill="#b5cea8"/><rect x="18" y="607.4" width="1" height="2" fill="#d4d4d4"/><rect x="20" y="607.4" width="6" height="2" fill="#b5cea8"/><rect x="26" y="607.4" width="1" height="2" fill="#d4d4d4"/><rect x="28" y="607.4" width="4" height="2" fill="#569cd6"/><rect x="32" y="607.4" width="1" height="2" fill="#ce9178"/><rect x="34" y="607.4" width="45" height="2" fill="#ce9178"/><rect x="0" y="609.4" width="1" height="2" fill="#d4d4d4"/><rect x="1" y="609.4" width="4" height="2" fill="#569cd6"/><rect x="5" y="609.4" width="1" height="2" fill="#d4d4d4"/><rect x="7" y="609.4" width="2" height="2" fill="#d4d4d4"/><rect x="10" y="609.4" width="8" height="2" fill="#b5cea8"/><rect x="18" y="609.4" width="1" height="2" fill="#d4d4d4"/><rect x="20" y="609.4" width="6" height="2" fill="#b5cea8"/><rect x="26" y="609.4" width="1" height="2" fill="#d4d4d4"/><rect x="28" y="609.4" width="4" height="2" fill="#569cd6"/><rect x="32" y="609.4" width="1" height="2" fill="#ce9178"/><rect x="34" y="609.4" width="64" height="2" fill="#ce9178"/><rect x="0" y="611.4" width="1" height="2" fill="#d4d4d4"/><rect x="1" y="611.4" width="4" height="2" fill="#569cd6"/><rect x="5" y="611.4" width="1" height="2" fill="#d4d4d4"/><rect x="7" y="611.4" width="2" height="2" fill="#d4d4d4"/><rect x="10" y="611.4" width="8" height="2" fill="#b5cea8"/><rect x="18" y="611.4" width="1" height="2" fill="#d4d4d4"/><rect x="20" y="611.4" width="6" height="2" fill="#b5cea8"/><rect x="26" y="611.4" width="1" height="2" fill="#d4d4d4"/><rect x="28" y="611.4" width="4" height="2" fill="#569cd6"/><rect x="32" y="611.4" width="1" height="2" fill="#ce9178"/><rect x="34" y="611.4" width="38" height="2" fill="#ce9178"/><rect x="0" y="613.4" width="1" height="2" fill="#d4d4d4"/><rect x="1" y="613.4" width="4" height="2" fill="#569cd6"/><rect x="5" y="613.4" width="1" height="2" fill="#d4d4d4"/><rect x="7" y="613.4" width="2" height="2" fill="#d4d4d4"/><rect x="10" y="613.4" width="8" height="2" fill="#b5cea8"/><rect x="18" y="613.4" width="1" height="2" fill="#d4d4d4"/><rect x="20" y="613.4" width="6" height="2" fill="#b5cea8"/><rect x="26" y="613.4" width="1" height="2" fill="#d4d4d4"/><rect x="28" y="613.4" width="4" height="2" fill="#569cd6"/><rect x="32" y="613.4" width="1" height="2" fill="#ce9178"/><rect x="34" y="613.4" width="63" height="2" fill="#ce9178"/><rect x="0" y="617.4" width="7" height="2" fill="#569cd6"/><rect x="0" y="619.4" width="2" height="2" fill="#6a9955"/><rect x="3" y="619.4" width="49" height="2" fill="#6a9955"/><rect x="0" y="621.4" width="2" height="2" fill="#6a9955"/><rect x="3" y="621.4" width="5" height="2" fill="#6a9955"/><rect x="9" y="621.4" width="10" height="2" fill="#6a9955"/><rect x="0" y="623.4" width="2" height="2" fill="#6a9955"/><rect x="3" y="623.4" width="52" height="2" fill="#6a9955"/><rect x="0" y="625.4" width="5" height="2" fill="#569cd6"/><rect x="6" y="625.4" width="12" height="2" fill="#569cd6"/><rect x="0" y="627.4" width="6" height="2" fill="#569cd6"/><rect x="7" y="627.4" width="4" height="2" fill="#569cd6"/><rect x="12" y="627.4" width="8" height="2" fill="#d4d4d4"/><rect x="0" y="629.4" width="44" height="2" fill="#d4d4d4"/><rect x="0" y="631.4" width="6" height="2" fill="#569cd6"/><rect x="0" y="633.4" width="1" height="2" fill="#d4d4d4"/><rect x="1" y="633.4" width="4" height="2" fill="#569cd6"/><rect x="5" y="633.4" width="1" height="2" fill="#d4d4d4"/><rect x="7" y="633.4" width="3" height="2" fill="#d4d4d4"/><rect x="11" y="633.4" width="4" height="2" fill="#d4d4d4"/><rect x="16" y="633.4" width="4" height="2" fill="#569cd6"/><rect x="20" y="633.4" width="2" height="2" fill="#d4d4d4"/><rect x="0" y="635.4" width="1" height="2" fill="#d4d4d4"/><rect x="1" y="635.4" width="4" height="2" fill="#569cd6"/><rect x="5" y="635.4" width="1" height="2" fill="#d4d4d4"/><rect x="7" y="635.4" width="3" height="2" fill="#d4d4d4"/><rect x="11" y="635.4" width="4" height="2" fill="#d4d4d4"/><rect x="16" y="635.4" width="4" height="2" fill="#569cd6"/><rect x="20" y="635.4" width="2" height="2" fill="#d4d4d4"/><rect x="0" y="637.4" width="1" height="2" fill="#d4d4d4"/><rect x="1" y="637.4" width="4" height="2" fill="#569cd6"/><rect x="5" y="637.4" width="1" height="2" fill="#d4d4d4"/><rect x="7" y="637.4" width="3" height="2" fill="#d4d4d4"/><rect x="11" y="637.4" width="4" height="2" fill="#d4d4d4"/><rect x="16" y="637.4" width="4" height="2" fill="#569cd6"/><rect x="20" y="637.4" width="2" height="2" fill="#d4d4d4"/><rect x="0" y="639.4" width="1" height="2" fill="#d4d4d4"/><rect x="1" y="639.4" width="4" height="2" fill="#569cd6"/><rect x="5" y="639.4" width="1" height="2" fill="#d4d4d4"/><rect x="7" y="639.4" width="3" height="2" fill="#d4d4d4"/><rect x="11" y="639.4" width="4" height="2" fill="#d4d4d4"/><rect x="16" y="639.4" width="4" height="2" fill="#569cd6"/><rect x="20" y="639.4" width="2" height="2" fill="#d4d4d4"/><rect x="0" y="641.4" width="1" height="2" fill="#d4d4d4"/><rect x="1" y="641.4" width="4" height="2" fill="#569cd6"/><rect x="5" y="641.4" width="1" height="2" fill="#d4d4d4"/><rect x="7" y="641.4" width="3" height="2" fill="#d4d4d4"/><rect x="11" y="641.4" width="4" height="2" fill="#d4d4d4"/><rect x="16" y="641.4" width="4" height="2" fill="#569cd6"/><rect x="20" y="641.4" width="2" height="2" fill="#d4d4d4"/><rect x="0" y="643.4" width="1" height="2" fill="#d4d4d4"/><rect x="1" y="643.4" width="4" height="2" fill="#569cd6"/><rect x="5" y="643.4" width="1" height="2" fill="#d4d4d4"/><rect x="7" y="643.4" width="3" height="2" fill="#d4d4d4"/><rect x="11" y="643.4" width="4" height="2" fill="#d4d4d4"/><rect x="16" y="643.4" width="4" height="2" fill="#569cd6"/><rect x="20" y="643.4" width="2" height="2" fill="#d4d4d4"/><rect x="0" y="645.4" width="1" height="2" fill="#d4d4d4"/><rect x="1" y="645.4" width="4" height="2" fill="#569cd6"/><rect x="5" y="645.4" width="1" height="2" fill="#d4d4d4"/><rect x="7" y="645.4" width="3" height="2" fill="#d4d4d4"/><rect x="11" y="645.4" width="4" height="2" fill="#d4d4d4"/><rect x="16" y="645.4" width="4" height="2" fill="#569cd6"/><rect x="20" y="645.4" width="2" height="2" fill="#d4d4d4"/><rect x="0" y="647.4" width="1" height="2" fill="#d4d4d4"/><rect x="1" y="647.4" width="4" height="2" fill="#569cd6"/><rect x="5" y="647.4" width="1" height="2" fill="#d4d4d4"/><rect x="7" y="647.4" width="3" height="2" fill="#d4d4d4"/><rect x="11" y="647.4" width="4" height="2" fill="#d4d4d4"/><rect x="16" y="647.4" width="4" height="2" fill="#569cd6"/><rect x="20" y="647.4" width="2" height="2" fill="#d4d4d4"/><rect x="0" y="649.4" width="1" height="2" fill="#d4d4d4"/><rect x="1" y="649.4" width="4" height="2" fill="#569cd6"/><rect x="5" y="649.4" width="1" height="2" fill="#d4d4d4"/><rect x="7" y="649.4" width="3" height="2" fill="#d4d4d4"/><rect x="11" y="649.4" width="4" height="2" fill="#d4d4d4"/><rect x="16" y="649.4" width="4" height="2" fill="#569cd6"/><rect x="20" y="649.4" width="2" height="2" fill="#d4d4d4"/><rect x="0" y="651.4" width="1" height="2" fill="#d4d4d4"/><rect x="1" y="651.4" width="4" height="2" fill="#569cd6"/><rect x="5" y="651.4" width="1" height="2" fill="#d4d4d4"/><rect x="7" y="651.4" width="3" height="2" fill="#d4d4d4"/><rect x="11" y="651.4" width="4" height="2" fill="#d4d4d4"/><rect x="16" y="651.4" width="4" height="2" fill="#569cd6"/><rect x="20" y="651.4" width="2" height="2" fill="#d4d4d4"/><rect x="0" y="653.4" width="1" height="2" fill="#d4d4d4"/><rect x="1" y="653.4" width="4" height="2" fill="#569cd6"/><rect x="5" y="653.4" width="1" height="2" fill="#d4d4d4"/><rect x="7" y="653.4" width="3" height="2" fill="#d4d4d4"/><rect x="11" y="653.4" width="4" height="2" fill="#d4d4d4"/><rect x="16" y="653.4" width="4" height="2" fill="#569cd6"/><rect x="20" y="653.4" width="2" height="2" fill="#d4d4d4"/><rect x="0" y="657.4" width="7" height="2" fill="#569cd6"/><rect x="0" y="659.4" width="7" height="2" fill="#569cd6"/><rect x="0" y="661.4" width="3" height="2" fill="#569cd6"/><rect x="4" y="661.4" width="21" height="2" fill="#d4d4d4"/><rect x="0" y="663.4" width="2" height="2" fill="#6a9955"/><rect x="3" y="663.4" width="90" height="2" fill="#6a9955"/><rect x="0" y="665.4" width="4" height="2" fill="#569cd6"/><rect x="5" y="665.4" width="9" height="2" fill="#569cd6"/><rect x="15" y="665.4" width="2" height="2" fill="#569cd6"/><rect x="18" y="665.4" width="6" height="2" fill="#569cd6"/><rect x="25" y="665.4" width="16" height="2" fill="#d4d4d4"/><rect x="0" y="667.4" width="9" height="2" fill="#d4d4d4"/><rect x="10" y="667.4" width="2" height="2" fill="#d4d4d4"/><rect x="0" y="669.4" width="6" height="2" fill="#569cd6"/><rect x="7" y="669.4" width="9" height="2" fill="#569cd6"/><rect x="17" y="669.4" width="17" height="2" fill="#d4d4d4"/><rect x="0" y="671.4" width="5" height="2" fill="#569cd6"/><rect x="0" y="675.4" width="2" height="2" fill="#6a9955"/><rect x="3" y="675.4" width="5" height="2" fill="#6a9955"/><rect x="9" y="675.4" width="10" height="2" fill="#6a9955"/><rect x="20" y="675.4" width="73" height="2" fill="#6a9955"/><rect x="0" y="679.4" width="7" height="2" fill="#569cd6"/><rect x="8" y="679.4" width="3" height="2" fill="#d4d4d4"/><rect x="12" y="679.4" width="3" height="2" fill="#569cd6"/><rect x="15" y="679.4" width="1" height="2" fill="#d4d4d4"/><rect x="0" y="681.4" width="3" height="2" fill="#569cd6"/><rect x="4" y="681.4" width="1" height="2" fill="#d4d4d4"/><rect x="6" y="681.4" width="1" height="2" fill="#d4d4d4"/><rect x="8" y="681.4" width="1" height="2" fill="#b5cea8"/><rect x="10" y="681.4" width="1" height="2" fill="#d4d4d4"/><rect x="0" y="685.4" width="2" height="2" fill="#6a9955"/><rect x="3" y="685.4" width="11" height="2" fill="#6a9955"/><rect x="15" y="685.4" width="3" height="2" fill="#6a9955"/><rect x="19" y="685.4" width="4" height="2" fill="#6a9955"/><rect x="24" y="685.4" width="6" height="2" fill="#6a9955"/><rect x="31" y="685.4" width="5" height="2" fill="#6a9955"/><rect x="37" y="685.4" width="6" height="2" fill="#6a9955"/><rect x="44" y="685.4" width="6" height="2" fill="#6a9955"/><rect x="51" y="685.4" width="2" height="2" fill="#6a9955"/><rect x="54" y="685.4" width="8" height="2" fill="#6a9955"/><rect x="0" y="687.4" width="6" height="2" fill="#569cd6"/><rect x="7" y="687.4" width="5" height="2" fill="#dcdcaa"/><rect x="12" y="687.4" width="3" height="2" fill="#d4d4d4"/><rect x="16" y="687.4" width="4" height="2" fill="#569cd6"/><rect x="21" y="687.4" width="1" height="2" fill="#d4d4d4"/><rect x="23" y="687.4" width="4" height="2" fill="#569cd6"/><rect x="28" y="687.4" width="7" height="2" fill="#d4d4d4"/><rect x="0" y="691.4" width="2" height="2" fill="#6a9955"/><rect x="3" y="691.4" width="6" height="2" fill="#6a9955"/><rect x="10" y="691.4" width="2" height="2" fill="#6a9955"/><rect x="13" y="691.4" width="7" height="2" fill="#6a9955"/><rect x="21" y="691.4" width="6" height="2" fill="#6a9955"/><rect x="28" y="691.4" width="2" height="2" fill="#6a9955"/><rect x="31" y="691.4" width="7" height="2" fill="#6a9955"/><rect x="39" y="691.4" width="4" height="2" fill="#6a9955"/><rect x="44" y="691.4" width="3" height="2" fill="#6a9955"/><rect x="48" y="691.4" width="7" height="2" fill="#6a9955"/><rect x="0" y="695.4" width="5" height="2" fill="#569cd6"/><rect x="6" y="695.4" width="1" height="2" fill="#d4d4d4"/><rect x="8" y="695.4" width="2" height="2" fill="#d4d4d4"/><rect x="11" y="695.4" width="1" height="2" fill="#d4d4d4"/><rect x="13" y="695.4" width="2" height="2" fill="#d4d4d4"/><rect x="0" y="699.4" width="2" height="2" fill="#6a9955"/><rect x="3" y="699.4" width="4" height="2" fill="#6a9955"/><rect x="8" y="699.4" width="4" height="2" fill="#6a9955"/><rect x="13" y="699.4" width="6" height="2" fill="#6a9955"/><rect x="20" y="699.4" width="1" height="2" fill="#6a9955"/><rect x="22" y="699.4" width="6" height="2" fill="#6a9955"/><rect x="29" y="699.4" width="10" height="2" fill="#6a9955"/><rect x="40" y="699.4" width="5" height="2" fill="#6a9955"/><rect x="46" y="699.4" width="3" height="2" fill="#6a9955"/><rect x="50" y="699.4" width="6" height="2" fill="#6a9955"/><rect x="57" y="699.4" width="3" height="2" fill="#6a9955"/><rect x="61" y="699.4" width="6" height="2" fill="#6a9955"/><rect x="68" y="699.4" width="10" height="2" fill="#6a9955"/><rect x="79" y="699.4" width="3" height="2" fill="#6a9955"/><rect x="0" y="703.4" width="3" height="2" fill="#569cd6"/><rect x="4" y="703.4" width="19" height="2" fill="#d4d4d4"/><rect x="23" y="703.4" width="2" height="2" fill="#b5cea8"/><rect x="25" y="703.4" width="2" height="2" fill="#d4d4d4"/><rect x="27" y="703.4" width="2" height="2" fill="#6a9955"/><rect x="30" y="703.4" width="4" height="2" fill="#6a9955"/><rect x="35" y="703.4" width="8" height="2" fill="#6a9955"/><rect x="44" y="703.4" width="6" height="2" fill="#6a9955"/><rect x="51" y="703.4" width="6" height="2" fill="#6a9955"/><rect x="58" y="703.4" width="5" height="2" fill="#6a9955"/><rect x="64" y="703.4" width="3" height="2" fill="#6a9955"/><rect x="68" y="703.4" width="4" height="2" fill="#6a9955"/><rect x="73" y="703.4" width="4" height="2" fill="#6a9955"/><rect x="78" y="703.4" width="4" height="2" fill="#6a9955"/><rect x="83" y="703.4" width="7" height="2" fill="#6a9955"/><rect x="0" y="705.4" width="3" height="2" fill="#569cd6"/><rect x="4" y="705.4" width="9" height="2" fill="#d4d4d4"/><rect x="13" y="705.4" width="5" height="2" fill="#dcdcaa"/><rect x="18" y="705.4" width="1" height="2" fill="#d4d4d4"/><rect x="19" y="705.4" width="4" height="2" fill="#dcdcaa"/><rect x="23" y="705.4" width="4" height="2" fill="#d4d4d4"/><rect x="27" y="705.4" width="9" height="2" fill="#b5cea8"/><rect x="36" y="705.4" width="1" height="2" fill="#d4d4d4"/><rect x="37" y="705.4" width="9" height="2" fill="#b5cea8"/><rect x="46" y="705.4" width="1" height="2" fill="#d4d4d4"/><rect x="47" y="705.4" width="1" height="2" fill="#b5cea8"/><rect x="48" y="705.4" width="3" height="2" fill="#d4d4d4"/><rect x="51" y="705.4" width="9" height="2" fill="#b5cea8"/><rect x="60" y="705.4" width="1" height="2" fill="#d4d4d4"/><rect x="61" y="705.4" width="2" height="2" fill="#6a9955"/><rect x="64" y="705.4" width="6" height="2" fill="#6a9955"/><rect x="71" y="705.4" width="4" height="2" fill="#6a9955"/><rect x="76" y="705.4" width="5" height="2" fill="#6a9955"/><rect x="82" y="705.4" width="6" height="2" fill="#6a9955"/><rect x="89" y="705.4" width="9" height="2" fill="#6a9955"/><rect x="0" y="707.4" width="3" height="2" fill="#569cd6"/><rect x="4" y="707.4" width="16" height="2" fill="#d4d4d4"/><rect x="20" y="707.4" width="6" height="2" fill="#dcdcaa"/><rect x="26" y="707.4" width="17" height="2" fill="#d4d4d4"/><rect x="43" y="707.4" width="3" height="2" fill="#b5cea8"/><rect x="46" y="707.4" width="3" height="2" fill="#d4d4d4"/><rect x="0" y="711.4" width="6" height="2" fill="#569cd6"/><rect x="7" y="711.4" width="6" height="2" fill="#d4d4d4"/><rect x="0" y="713.4" width="3" height="2" fill="#569cd6"/><rect x="4" y="713.4" width="27" height="2" fill="#d4d4d4"/><rect x="0" y="715.4" width="5" height="2" fill="#569cd6"/><rect x="6" y="715.4" width="9" height="2" fill="#d4d4d4"/><rect x="0" y="719.4" width="3" height="2" fill="#569cd6"/><rect x="4" y="719.4" width="1" height="2" fill="#d4d4d4"/><rect x="6" y="719.4" width="2" height="2" fill="#d4d4d4"/><rect x="9" y="719.4" width="1" height="2" fill="#d4d4d4"/><rect x="10" y="719.4" width="1" height="2" fill="#b5cea8"/><rect x="11" y="719.4" width="1" height="2" fill="#d4d4d4"/><rect x="0" y="723.4" width="3" height="2" fill="#569cd6"/><rect x="4" y="723.4" width="5" height="2" fill="#569cd6"/><rect x="9" y="723.4" width="1" height="2" fill="#d4d4d4"/><rect x="0" y="727.4" width="3" height="2" fill="#569cd6"/><rect x="4" y="727.4" width="2" height="2" fill="#d4d4d4"/><rect x="0" y="731.4" width="9" height="2" fill="#d4d4d4"/><rect x="10" y="731.4" width="1" height="2" fill="#d4d4d4"/><rect x="0" y="733.4" width="4" height="2" fill="#569cd6"/><rect x="5" y="733.4" width="18" height="2" fill="#d4d4d4"/></g></svg>
<div class="b" style="left:1904px;top:108px;width:1px;height:773px;background:#3a3a3a"></div>
<div class="b" style="left:1905px;top:795px;width:15px;height:42px;background:#434343"></div>
<div class="b" style="left:1905px;top:806px;width:15px;height:2px;background:#a0a0a0"></div>
<div class="b" style="left:59px;top:880px;width:1861px;height:124px;background:#1e1e1e;border-top:1px solid #454545"></div>
<div class="t" style="left:84.60px;top:894.83px;font-size:14.20px;line-height:18px;letter-spacing:-0.900px;color:#9d9d9d;font-family:"Liberation Sans", sans-serif;">PROBLEMS</div>
<div class="t" style="left:176.25px;top:894.83px;font-size:14.20px;line-height:18px;letter-spacing:-0.900px;color:#e7e7e7;font-family:"Liberation Sans", sans-serif;">OUTPUT</div>
<div class="t" style="left:252.70px;top:894.83px;font-size:14.20px;line-height:18px;letter-spacing:-0.900px;color:#9d9d9d;font-family:"Liberation Sans", sans-serif;">DEBUG CONSOLE</div>
<div class="t" style="left:385.00px;top:894.83px;font-size:14.20px;line-height:18px;letter-spacing:-0.900px;color:#9d9d9d;font-family:"Liberation Sans", sans-serif;">TERMINAL</div>
<div class="b" style="left:176px;top:919.5px;width:52px;height:1.5px;background:#e7e7e7"></div>
<div class="b" style="left:1487px;top:889px;width:212px;height:30px;background:#3c3c3c"></div>
<div class="b" style="left:1490px;top:889px;width:179px;height:30px;overflow:hidden"><div class="t" style="left:7.00px;top:5.18px;font-size:16.80px;line-height:21px;letter-spacing:-0.147px;color:#f0f0f0;font-family:"Liberation Sans", sans-serif;">SqlToolsService Initializing</div></div>
<svg style="left:1677px;top:900px" width="12" height="8" viewBox="0 0 12 8"><path d="M1 1 L6 6 L11 1" fill="none" stroke="#c5c5c5" stroke-width="1.4"/></svg>
<svg style="left:1719px;top:895px" width="20" height="17" viewBox="0 0 20 17" fill="none" stroke="#c5c5c5" stroke-width="1.4"><path d="M1 2 H19 M1 6 H19 M1 10 H11 M1 14 H11 M13 10 L18 15 M18 10 L13 15"/></svg>
<svg style="left:1760px;top:893px" width="18" height="21" viewBox="0 0 18 21" fill="none" stroke="#c5c5c5" stroke-width="1.6"><rect x="1.5" y="9" width="15" height="11" rx="1.5"/><path d="M4.5 9 V6 Q4.5 1.5 9 1.5 Q13.5 1.5 13.5 6 V9"/></svg>
<svg style="left:1800px;top:893px" width="21" height="21" viewBox="0 0 21 21" fill="none" stroke="#6b6b6b" stroke-width="1.5"><path d="M7 7 V20 H20 V6 L15 1 H11 M14 1 V7 H20 M1 9 Q1 4 7 4 H10 M8 1.5 L10.5 4 L8 6.5"/></svg>
<svg style="left:1840px;top:897px" width="17" height="10" viewBox="0 0 17 10"><path d="M1 9 L8.5 1.5 L16 9" fill="none" stroke="#c5c5c5" stroke-width="1.6"/></svg>
<svg style="left:1883px;top:897px" width="13" height="13" viewBox="0 0 13 13"><path d="M1 1 L12 12 M12 1 L1 12" stroke="#c5c5c5" stroke-width="1.6"/></svg>
<div class="b" style="left:59px;top:924px;width:1845px;height:80px;overflow:hidden">
<div class="code" style="left:25.0px;top:-2.57px">Note: mssql commands will be available after installing the service.</div>
<div class="code" style="left:25.0px;top:44.33px">Platform: win32, x86_64 (Windows)</div>
</div>
<div class="b" style="left:59px;top:925px;width:1861px;height:5px;background:linear-gradient(#000000a0,#00000000)"></div>
<div class="b" style="left:1904px;top:925px;width:1px;height:79px;background:#3a3a3a"></div>
<div class="b" style="left:1905px;top:941px;width:15px;height:2px;background:#a0a0a0"></div>
<div class="b" style="left:0;top:1004px;width:1920px;height:26px;background:#007acc"></div>
<svg style="left:19px;top:1007px" width="17" height="20" viewBox="0 0 17 20" fill="none" stroke="#fff" stroke-width="1.6"><circle cx="4" cy="3.5" r="2.5"/><circle cx="4" cy="16.5" r="2.5"/><circle cx="13" cy="7" r="2.5"/><path d="M4 6 V14 M13 9.5 Q13 13 5.5 14.5"/></svg>
<svg style="left:55px;top:1010px" width="20" height="16" viewBox="0 0 20 16" fill="none" stroke="#fff" stroke-width="1.6"><path d="M6 12 H4.5 Q1 12 1 8.5 Q1 5 4.5 5 Q5.5 1 10 1 Q14.5 1 15 5 Q19 5 19 8.5 Q19 12 15.5 12 H14 M10 15 V7 M7 10 L10 7 L13 10"/></svg>
<svg style="left:93px;top:1009px" width="18" height="18" viewBox="0 0 18 18" fill="none" stroke="#fff" stroke-width="1.5"><circle cx="9" cy="9" r="7.5"/><path d="M6 6 L12 12 M12 6 L6 12"/></svg>
<div class="t" style="left:114.50px;top:1007.35px;font-size:16.30px;line-height:20px;letter-spacing:0.000px;color:#ffffff;font-family:"Liberation Sans", sans-serif;">0</div>
<svg style="left:127px;top:1009px" width="18" height="17" viewBox="0 0 18 17" fill="none" stroke="#fff" stroke-width="1.5"><path d="M9 1.5 L17 15.5 H1 Z M9 6 V11 M9 12.5 V14"/></svg>
<div class="t" style="left:148.80px;top:1007.35px;font-size:16.30px;line-height:20px;letter-spacing:0.000px;color:#ffffff;font-family:"Liberation Sans", sans-serif;">0</div>
<svg style="left:176px;top:1008px" width="19" height="19" viewBox="0 0 19 19" fill="none" stroke="#fff" stroke-width="1.7"><path d="M1.5 11 Q3 4 12 4.5 V1.5 L18 6.5 L12 11.5 V8 Q6 8 3.5 13"/><circle cx="7" cy="15" r="2.5"/></svg>
<div class="t" style="left:198.70px;top:1007.59px;font-size:15.60px;line-height:20px;letter-spacing:-0.900px;color:#ffffff;font-family:"Liberation Sans", sans-serif;">Live Share</div>
<svg style="left:288px;top:1008px" width="13" height="19" viewBox="0 0 13 19" fill="none" stroke="#fff" stroke-width="1.5"><path d="M9 1 L2 11 H7 L4 18 L12 7 H7 Z"/></svg>
<div class="t" style="left:1513.60px;top:1007.59px;font-size:15.60px;line-height:20px;letter-spacing:-0.652px;color:#ffffff;font-family:"Liberation Sans", sans-serif;">Ln 545, Col 36</div>
<div class="t" style="left:1626.90px;top:1007.59px;font-size:15.60px;line-height:20px;letter-spacing:-0.900px;color:#ffffff;font-family:"Liberation Sans", sans-serif;">Spaces: 4</div>
<div class="t" style="left:1707.80px;top:1007.59px;font-size:15.60px;line-height:20px;letter-spacing:-0.900px;color:#ffffff;font-family:"Liberation Sans", sans-serif;">UTF-8</div>
<div class="t" style="left:1767.30px;top:1007.59px;font-size:15.60px;line-height:20px;letter-spacing:-0.900px;color:#ffffff;font-family:"Liberation Sans", sans-serif;">LF</div>
<div class="t" style="left:1801.50px;top:1007.59px;font-size:15.60px;line-height:20px;letter-spacing:-0.900px;color:#ffffff;font-family:"Liberation Sans", sans-serif;">SQL</div>
<svg style="left:1840px;top:1004px" width="80" height="26" viewBox="0 0 80 26" fill="none" stroke="#fff" stroke-width="1.4"><path d="M13.2 7.6 V5.6 H24.5 V12.9 H21.6 L19.9 15.3 V13.2"/><circle cx="14.4" cy="12.3" r="3.2"/><path d="M9.3 21.3 Q9.3 16.2 14.4 16.2 Q19.5 16.2 19.5 21.3"/><path d="M54.2 5.3 Q49.4 5.8 49.4 11.5 V17.6 L48.2 18.9 H60.9 L59.7 17.6 V14.3 M52.6 20.2 Q54.4 22.6 56.2 20.2"/><circle cx="59" cy="8.5" r="3.6" fill="#fff" stroke="none"/></svg>
<div class="b" style="left:0;top:1030px;width:1920px;height:50px;background:linear-gradient(90deg,#1c1c1c 0px,#1c1c1c 480px,#2b2b2b 520px,#262626 570px,#1d1d1d 630px,#1c1c1c 900px,#222323 1030px,#2c2d2d 1090px,#2a2a2a 1150px,#1e1e1e 1260px,#1b1b1b 1500px,#1a1a1a 1920px)"></div>
<svg style="left:20px;top:1045px" width="20" height="20" viewBox="0 0 20 20" fill="#fff"><path d="M0 2.8 L8.2 1.7 V9.5 H0 Z M9.2 1.5 L20 0 V9.5 H9.2 Z M0 10.5 H8.2 V18.3 L0 17.2 Z M9.2 10.5 H20 V20 L9.2 18.5 Z"/></svg>
<div class="b" style="left:60px;top:1030px;width:430px;height:50px;background:#f0f0f0"></div>
<svg style="left:75px;top:1045px" width="21" height="21" viewBox="0 0 21 21" fill="none" stroke="#000" stroke-width="1.6"><circle cx="13" cy="8" r="6.5"/><path d="M8.3 12.7 L1 20"/></svg>
<div class="t" style="left:110.70px;top:1044.30px;font-size:18.75px;line-height:23px;letter-spacing:-0.173px;color:#3b3b3b;font-family:"Liberation Sans", sans-serif;">Type here to search</div>
<svg style="left:509px;top:1044px" width="22" height="22" viewBox="0 0 22 22"><circle cx="11" cy="11" r="9" fill="none" stroke="#fff" stroke-width="2.4"/></svg>
<svg style="left:568px;top:1045px" width="23" height="21" viewBox="0 0 23 21" fill="none" stroke="#fff" stroke-width="1.5"><path d="M1 1 H15 M1 20 H15 M3 5 H13 V16 H3 Z M20 1 V4 M20 8 V13 M20 17 V20"/></svg>
<div class="b" style="left:616px;top:1044px;width:1px;height:24px;background:#5a5a5a"></div>
<div class="b" style="left:619px;top:1044px;width:1px;height:24px;background:#3a3a3a"></div>
<div class="b" style="left:1192px;top:1030px;width:61px;height:50px;background:#474747"></div>
<div class="b" style="left:639px;top:1077px;width:51px;height:3px;background:#76b9ed"></div>
<div class="b" style="left:701px;top:1077px;width:51px;height:3px;background:#76b9ed"></div>
<div class="b" style="left:763px;top:1077px;width:51px;height:3px;background:#76b9ed"></div>
<div class="b" style="left:887px;top:1077px;width:51px;height:3px;background:#76b9ed"></div>
<div class="b" style="left:949px;top:1077px;width:51px;height:3px;background:#76b9ed"></div>
<div class="b" style="left:1011px;top:1077px;width:51px;height:3px;background:#76b9ed"></div>
<div class="b" style="left:1135px;top:1077px;width:51px;height:3px;background:#76b9ed"></div>
<div class="b" style="left:1192px;top:1077px;width:61px;height:3px;background:#76b9ed"></div>
<div class="b" style="left:1259px;top:1077px;width:51px;height:3px;background:#76b9ed"></div>
<div class="b" style="left:1321px;top:1077px;width:51px;height:3px;background:#76b9ed"></div>
<div class="b" style="left:1383px;top:1077px;width:51px;height:3px;background:#76b9ed"></div>
<div class="b" style="left:1445px;top:1077px;width:51px;height:3px;background:#76b9ed"></div>
<div class="b" style="left:1507px;top:1077px;width:51px;height:3px;background:#76b9ed"></div>
<svg style="left:650px;top:1041px" width="28" height="28" viewBox="0 0 28 28">
<circle cx="14" cy="14" r="13.8" fill="#db4437"/>
<path d="M14 14 L26 7.1 A13.8 13.8 0 0 1 14 27.8 Z" fill="#fcc934"/>
<path d="M14 14 L14 27.8 A13.8 13.8 0 0 1 2 7.1 Z" fill="#0f9d58"/>
<circle cx="14" cy="14" r="6.3" fill="#fff"/><circle cx="14" cy="14" r="5" fill="#4285f4"/></svg>
<svg style="left:711px;top:1040px" width="29" height="29" viewBox="0 0 29 29">
<defs><linearGradient id="ff" x1="0" y1="0" x2="0" y2="1"><stop offset="0" stop-color="#ffbd4f"/><stop offset="0.5" stop-color="#ff6a2a"/><stop offset="1" stop-color="#e31587"/></linearGradient></defs>
<path d="M14.5 28.5 Q1 28.5 1 15 Q1 8 6 4 Q5 9 8 10 Q10 5 15 3 Q20 1 21 0 Q21 4 23 6 Q28 10 28 15 Q28 28.5 14.5 28.5 Z" fill="url(#ff)"/>
<circle cx="14" cy="15.5" r="6" fill="#7542e5"/><path d="M7 11 Q12 7 18 10 Q12 10 10 13 Z" fill="#ffa436"/></svg>
<svg style="left:773px;top:1040px" width="30" height="30" viewBox="0 0 30 30"><rect width="30" height="30" fill="#24a8d8"/><path d="M9 6 H14 V22 H22 V25 H9 Z" fill="#fff"/><path d="M9 6 L6 25 H9 Z" fill="#0b3a86"/></svg>
<svg style="left:835px;top:1040px" width="46" height="36" viewBox="0 0 46 36">
<path d="M0 11 L15 0 L30 11 Z" fill="#0b5cad"/><rect x="0" y="11" width="30" height="18" fill="#34a3f0"/><path d="M0 11 H30 L15 20 Z" fill="#f4f8fc"/><path d="M0 11 L15 20 L30 11 V13 L15 22 L0 13 Z" fill="#1e7fd4" opacity="0.5"/>
<rect x="11" y="14" width="34" height="20.5" rx="10.25" fill="#2b2b2b" stroke="#9a9a9a" stroke-width="1"/>
<text x="28" y="30" font-family="Liberation Sans" font-size="15" fill="#fff" text-anchor="middle">99+</text></svg>
<svg style="left:900px;top:1042px" width="25" height="25" viewBox="0 0 25 25">
<path d="M2 14 Q2 3 12.5 2 Q24 2 24 13 V15 H8 Q9 20 15 20 Q19 20 22 18 V23 Q19 25 14 25 Q4 25 2 14 Z M8 11 H18 Q17 6 13 6 Q9 6 8 11 Z" fill="#1e8ad6"/></svg>
<svg style="left:960px;top:1043px" width="28" height="24" viewBox="0 0 28 24">
<path d="M0 2 Q0 0 2 0 H10 L13 3 H26 Q28 3 28 5 V21 Q28 23 26 23 H2 Q0 23 0 21 Z" fill="#ffd35b"/><path d="M0 5 H28 V3 H13 L10 0 H2 Q0 0 0 2 Z" fill="#e8a922"/>
<path d="M5 23 V12 Q5 11 6 11 H22 Q23 11 23 12 V23 H19 V16 H9 V23 Z" fill="#3c90d8"/></svg>
<svg style="left:1021px;top:1040px" width="29" height="29" viewBox="0 0 29 29">
<path d="M9 7 Q9 1 14.5 1 Q20 1 20 7" fill="none" stroke="#e0e0e0" stroke-width="1.8"/><rect x="0" y="7" width="29" height="22" rx="1" fill="#fff"/>
<rect x="8" y="12" width="6" height="6" fill="#f35325"/><rect x="15" y="12" width="6" height="6" fill="#81bc06"/><rect x="8" y="19" width="6" height="6" fill="#05a6f0"/><rect x="15" y="19" width="6" height="6" fill="#ffba08"/></svg>
<svg style="left:1083px;top:1040px" width="30" height="30" viewBox="0 0 30 30"><rect width="30" height="30" fill="#e9302a"/>
<path d="M10 8 V22 M15 8 V22 M20 8 V22" stroke="#fff" stroke-width="1.8"/><rect x="8.5" y="12" width="3" height="3" fill="#fff"/><rect x="13.5" y="16" width="3" height="3" fill="#fff"/><rect x="18.5" y="10" width="3" height="3" fill="#fff"/></svg>
<svg style="left:1145px;top:1041px" width="30" height="28" viewBox="0 0 30 28">
<rect x="7" y="0" width="23" height="28" rx="1.5" fill="#41a5ee"/><rect x="7" y="9" width="23" height="10" fill="#2b7cd3"/><rect x="7" y="19" width="23" height="9" fill="#185abd"/>
<rect x="0" y="7" width="16" height="15" rx="1.5" fill="#185abd"/><text x="8" y="19" font-family="Liberation Sans" font-weight="bold" font-size="11" fill="#fff" text-anchor="middle">W</text></svg>
<svg style="left:1206px;top:1040px" width="31" height="31" viewBox="0 0 31 31">
<path d="M2.5 20.7 L22.6 3.75 M2.5 9.9 L22.6 26.85" stroke="#0a82d8" stroke-width="5" stroke-linecap="square"/>
<path d="M22.6 0 L30.7 4.2 V26.25 L22.6 30.6 Z" fill="#21a4ee"/></svg>
<svg style="left:1269px;top:1040px" width="30" height="30" viewBox="0 0 30 30"><rect width="30" height="30" fill="#bf0000" stroke="#8a0000" stroke-dasharray="1.5 1.5"/>
<path d="M8 7 H19 L18 10.5 H11.5 L10.8 14 H16 L15.4 17 H10.2 L8.5 25 H5 Z" fill="#fff"/><path d="M15 18 H24 L23.5 20.5 L18 23 H23 L22.5 25 H14 L14.5 22.5 L20 20 H14.6 Z" fill="#fff"/></svg>
<svg style="left:1333.3px;top:1042.5px" width="24" height="24" viewBox="0 0 24 24"><path d="M20.31 9.77 L23.42 9.99 L23.42 14.01 L20.31 14.23 L19.45 16.30 L21.50 18.65 L18.65 21.50 L16.30 19.45 L14.23 20.31 L14.01 23.42 L9.99 23.42 L9.77 20.31 L7.70 19.45 L5.35 21.50 L2.50 18.65 L4.55 16.30 L3.69 14.23 L0.58 14.01 L0.58 9.99 L3.69 9.77 L4.55 7.70 L2.50 5.35 L5.35 2.50 L7.70 4.55 L9.77 3.69 L9.99 0.58 L14.01 0.58 L14.23 3.69 L16.30 4.55 L18.65 2.50 L21.50 5.35 L19.45 7.70 Z" fill="#fff"/><circle cx="12" cy="12" r="4.8" fill="#1c1c1c"/></svg>
<svg style="left:1393px;top:1041px" width="28" height="28" viewBox="0 0 28 28"><path d="M9 1 L24 4 L27 24 L9 27 L1 22 Z" fill="#d7a94b"/><path d="M8 1 L23 3 L25 23 L6 26 L1 21 Z" fill="#dfeef2"/><path d="M8 1 L23 3 L18 18 L1 21 Z" fill="#7fc0d0"/><path d="M8 1 L16 2 L10 12 L1 21 Z" fill="#a6d8e2"/></svg>
<svg style="left:1456px;top:1041px" width="28" height="28" viewBox="0 0 28 28"><defs><linearGradient id="ph" x1="0" y1="0" x2="0" y2="1"><stop offset="0" stop-color="#31a9e9"/><stop offset="1" stop-color="#5b8de8"/></linearGradient></defs><rect width="28" height="28" rx="1.5" fill="url(#ph)"/><circle cx="19" cy="7" r="2.5" fill="#e8f4ff"/><path d="M0 19 L9 10 L28 28 H0 Z" fill="#1a4c93"/><path d="M14 17 L20 13 L28 19 V28 H20 Z" fill="#6e72d6" opacity="0.8"/></svg>
<svg style="left:1517px;top:1040px" width="29" height="29" viewBox="0 0 29 29"><rect width="29" height="29" rx="3" fill="#2e6a8e"/><path d="M4 4 Q10 8 12 14 Q14 20 20 22 L22 26 M6 6 Q6 14 10 18" fill="none" stroke="#cfe3ee" stroke-width="0.9"/><path d="M22 3 L26 7 M24 5 L20 9" stroke="#e6f0f6" stroke-width="1.6"/></svg>
<div class="b" style="left:1424px;top:1077px;width:10px;height:3px;background:#4f88b5"></div>
<div class="b" style="left:1486px;top:1077px;width:10px;height:3px;background:#4f88b5"></div>
<div class="b" style="left:1591px;top:1043px;width:62px;height:23px;border:2px solid #fff;background:#000"></div>
<div class="b" style="left:1593px;top:1045px;width:22px;height:19px;background:#1e9e4a"></div>
<div class="b" style="left:1653px;top:1050px;width:3px;height:9px;background:#fff"></div>
<div class="t" style="left:1604.00px;top:1045.09px;font-size:18.50px;line-height:23px;letter-spacing:-0.900px;color:#ffffff;font-family:"Liberation Sans", sans-serif;">37%</div>
<svg style="left:1691px;top:1049px" width="17" height="10" viewBox="0 0 17 10"><path d="M1 9 L8.5 1.5 L16 9" fill="none" stroke="#fff" stroke-width="1.5"/></svg>
<svg style="left:1734px;top:1043px" width="22" height="25" viewBox="0 0 22 25" fill="none" stroke="#fff" stroke-width="1.4"><path d="M14 2 Q18 0 19 3 L9 19 Q7 23 4 22 Q2 20 4 17 L14 2 M12 6 L16 8 M1 23 Q6 22 8 18 Q10 24 20 17"/></svg>
<div class="t" style="left:1782.70px;top:1033.89px;font-size:15.60px;line-height:20px;letter-spacing:-0.900px;color:#ffffff;font-family:"Liberation Sans", sans-serif;">11:03 PM</div>
<div class="t" style="left:1778.00px;top:1057.29px;font-size:15.60px;line-height:20px;letter-spacing:-0.212px;color:#ffffff;font-family:"Liberation Sans", sans-serif;">8/23/2020</div>
<svg style="left:1869px;top:1045px" width="21" height="21" viewBox="0 0 21 21" fill="none" stroke="#fff" stroke-width="1.4"><path d="M1 1 H20 V15 H12 L10 19 L8 15 H1 Z"/></svg>
<div class="b" style="left:1914px;top:1030px;width:1px;height:50px;background:#5a5a5a"></div></body></html>
